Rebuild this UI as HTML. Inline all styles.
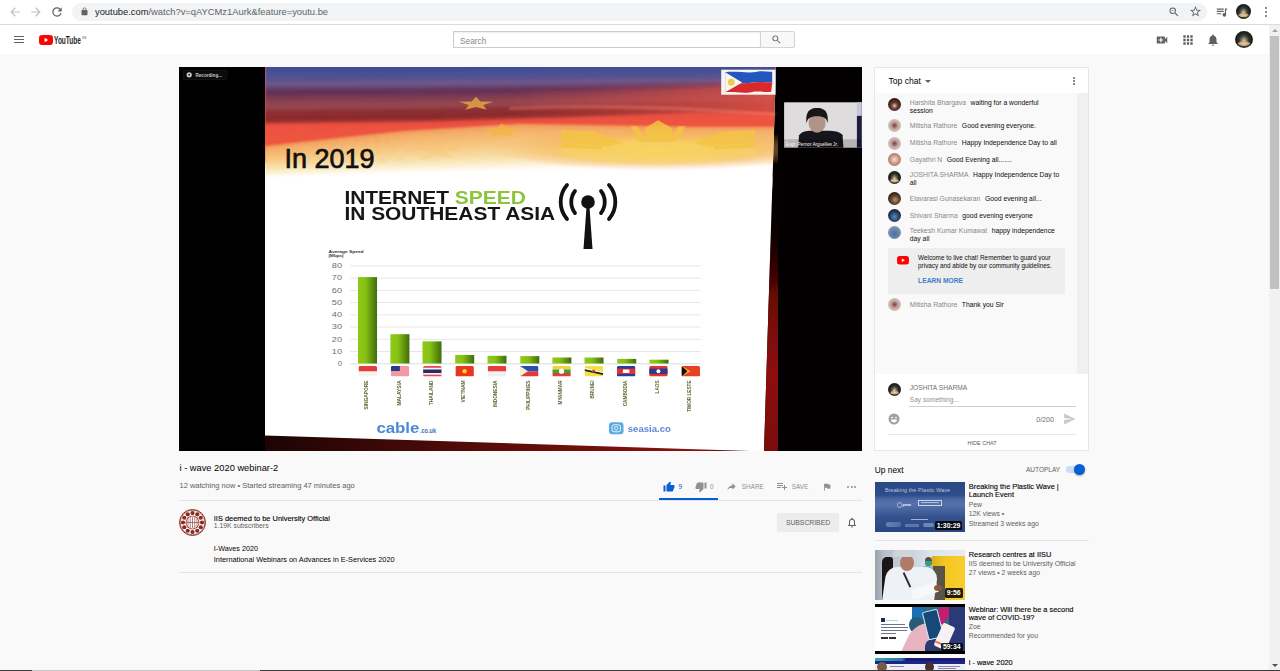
<!DOCTYPE html>
<html><head><meta charset="utf-8"><title>i - wave 2020 webinar-2 - YouTube</title>
<style>
html,body{margin:0;padding:0;width:1280px;height:671px;overflow:hidden;background:#f9f9f9;font-family:"Liberation Sans",sans-serif;}
.t{position:absolute;white-space:nowrap;line-height:1;}
.av{position:absolute;border-radius:50%;background:radial-gradient(ellipse 38% 16% at 50% 74%,#e8d4a8 0%,#c8a474 70%,rgba(160,120,70,0) 100%),radial-gradient(ellipse 40% 50% at 50% 58%,#e0d8c0 0%,#8a8476 30%,#3c3c36 65%,#1e1e1c 100%);}
</style></head><body>
<div style="position:absolute;left:0px;top:0px;width:1280px;height:24px;background:#fff"></div>
<div style="position:absolute;left:0px;top:24px;width:1280px;height:1px;background:#dadce0"></div>
<svg style="position:absolute;left:8px;top:5px" width="14" height="14" viewBox="0 0 24 24"><path d="M20 11H7.83l5.59-5.59L12 4l-8 8 8 8 1.41-1.41L7.83 13H20v-2z" fill="#bdc1c6"/></svg>
<svg style="position:absolute;left:29px;top:5px" width="14" height="14" viewBox="0 0 24 24"><path d="M12 4l-1.41 1.41L16.17 11H4v2h12.17l-5.58 5.59L12 20l8-8z" fill="#bdc1c6"/></svg>
<svg style="position:absolute;left:50px;top:5px" width="14" height="14" viewBox="0 0 24 24"><path d="M17.65 6.35A7.958 7.958 0 0 0 12 4c-4.42 0-7.99 3.58-7.99 8s3.57 8 7.99 8c3.73 0 6.84-2.55 7.73-6h-2.08A5.99 5.99 0 0 1 12 18c-3.31 0-6-2.69-6-6s2.69-6 6-6c1.66 0 3.14.69 4.22 1.78L13 11h7V4l-2.35 2.35z" fill="#5f6368"/></svg>
<div style="position:absolute;left:72px;top:3px;width:1135px;height:18px;background:#f1f3f4;border-radius:9px"></div>
<svg style="position:absolute;left:79.5px;top:7px" width="9" height="9" viewBox="0 0 24 24"><path d="M18 8h-1V6c0-2.76-2.24-5-5-5S7 3.24 7 6v2H6c-1.1 0-2 .9-2 2v10c0 1.1.9 2 2 2h12c1.1 0 2-.9 2-2V10c0-1.1-.9-2-2-2zM9 6c0-1.66 1.34-3 3-3s3 1.34 3 3v2H9V6z" fill="#5f6368"/></svg>
<div class="t" style="left:95.00px;top:8.39px;font-size:9.35px;color:#5f6368;font-weight:400;"><span style="color:#202124">youtube.com</span>/watch?v=qAYCMz1Aurk&amp;feature=youtu.be</div>
<svg style="position:absolute;left:1168px;top:6px" width="12" height="12" viewBox="0 0 24 24"><path d="M15.5 14h-.79l-.28-.27A6.471 6.471 0 0 0 16 9.5 6.5 6.5 0 1 0 9.5 16c1.61 0 3.09-.59 4.23-1.57l.27.28v.79l5 4.99L20.49 19l-4.99-5zm-6 0C7.01 14 5 11.99 5 9.5S7.01 5 9.5 5 14 7.01 14 9.5 11.99 14 9.5 14zM7 9h5v1H7z" fill="#5f6368"/></svg>
<svg style="position:absolute;left:1189px;top:5px" width="13" height="13" viewBox="0 0 24 24"><path d="M22 9.24l-7.19-.62L12 2 9.19 8.63 2 9.24l5.46 4.73L5.82 21 12 17.27 18.18 21l-1.63-7.03L22 9.24zM12 15.4l-3.76 2.27 1-4.28-3.32-2.88 4.38-.38L12 6.1l1.71 4.04 4.38.38-3.32 2.88 1 4.28L12 15.4z" fill="#5f6368"/></svg>
<svg style="position:absolute;left:1215px;top:5px" width="14" height="14" viewBox="0 0 24 24"><path d="M3 6h12v2H3zm0 4h12v2H3zm0 4h8v2H3z M17 6h4v2h-2v9a3 3 0 1 1-2-2.83z" fill="#5f6368"/></svg>
<div class="av" style="left:1236px;top:4px;width:15px;height:15px"></div>
<div style="position:absolute;left:1265px;top:7px;width:2px;height:2px;background:#5f6368;border-radius:1px"></div>
<div style="position:absolute;left:1265px;top:11px;width:2px;height:2px;background:#5f6368;border-radius:1px"></div>
<div style="position:absolute;left:1265px;top:15px;width:2px;height:2px;background:#5f6368;border-radius:1px"></div>
<div style="position:absolute;left:0px;top:25px;width:1269px;height:29px;background:#fff"></div>
<div style="position:absolute;left:14px;top:36px;width:10px;height:1.3px;background:#606060"></div>
<div style="position:absolute;left:14px;top:39px;width:10px;height:1.3px;background:#606060"></div>
<div style="position:absolute;left:14px;top:42px;width:10px;height:1.3px;background:#606060"></div>
<svg style="position:absolute;left:39px;top:35px" width="14" height="10" viewBox="0 0 28 20"><path d="M27.4 3.1A3.6 3.6 0 0 0 24.9.6C22.7 0 14 0 14 0S5.3 0 3.1.6A3.6 3.6 0 0 0 .6 3.1C0 5.3 0 10 0 10s0 4.7.6 6.9a3.6 3.6 0 0 0 2.5 2.5C5.3 20 14 20 14 20s8.7 0 10.9-.6a3.6 3.6 0 0 0 2.5-2.5C28 14.7 28 10 28 10s0-4.7-.6-6.9z" fill="#f00"/><path d="M11.2 14.3L18.5 10l-7.3-4.3z" fill="#fff"/></svg>
<svg style="position:absolute;left:54px;top:33px" width="30" height="14"><text x="0" y="11.2" font-size="11.5" font-weight="bold" fill="#282828" textLength="27" lengthAdjust="spacingAndGlyphs" font-family="Liberation Sans">YouTube</text></svg>
<div class="t" style="left:82.00px;top:36.24px;font-size:4.2px;color:#606060;font-weight:400;">IN</div>
<div style="position:absolute;left:453px;top:31px;width:308px;height:17px;background:#fff;border:1px solid #ccc;box-sizing:border-box;box-shadow:inset 0 1px 2px #eee"></div>
<div class="t" style="left:460.00px;top:36.67px;font-size:8.3px;color:#888;font-weight:400;">Search</div>
<div style="position:absolute;left:760px;top:31px;width:35px;height:17px;background:#f8f8f8;border:1px solid #d3d3d3;box-sizing:border-box;border-radius:0 2px 2px 0"></div>
<svg style="position:absolute;left:771px;top:34px" width="11" height="11" viewBox="0 0 24 24"><path d="M15.5 14h-.79l-.28-.27A6.471 6.471 0 0 0 16 9.5 6.5 6.5 0 1 0 9.5 16c1.61 0 3.09-.59 4.23-1.57l.27.28v.79l5 4.99L20.49 19l-4.99-5zm-6 0C7.01 14 5 11.99 5 9.5S7.01 5 9.5 5 14 7.01 14 9.5 11.99 14 9.5 14z" fill="#606060"/></svg>
<svg style="position:absolute;left:1155px;top:33px" width="14" height="14" viewBox="0 0 24 24"><path d="M17 10.5V7c0-.55-.45-1-1-1H4c-.55 0-1 .45-1 1v10c0 .55.45 1 1 1h12c.55 0 1-.45 1-1v-3.5l4 4v-11l-4 4zM14 13h-3v3H9v-3H6v-2h3V8h2v3h3v2z" fill="#606060"/></svg>
<svg style="position:absolute;left:1181px;top:33px" width="14" height="14" viewBox="0 0 24 24"><path d="M4 8h4V4H4v4zm6 12h4v-4h-4v4zm-6 0h4v-4H4v4zm0-6h4v-4H4v4zm6 0h4v-4h-4v4zm6-10v4h4V4h-4zm-6 4h4V4h-4v4zm6 6h4v-4h-4v4zm0 6h4v-4h-4v4z" fill="#606060"/></svg>
<svg style="position:absolute;left:1206px;top:33px" width="14" height="14" viewBox="0 0 24 24"><path d="M12 22c1.1 0 2-.9 2-2h-4c0 1.1.89 2 2 2zm6-6v-5c0-3.07-1.64-5.64-4.5-6.32V4c0-.83-.67-1.5-1.5-1.5s-1.5.67-1.5 1.5v.68C7.63 5.36 6 7.92 6 11v5l-2 2v1h16v-1l-2-2z" fill="#606060"/></svg>
<div class="av" style="left:1235px;top:31px;width:18px;height:17px"></div>
<div style="position:absolute;left:1269px;top:25px;width:11px;height:646px;background:#f1f1f1"></div>
<div style="position:absolute;left:1270px;top:36px;width:9px;height:253px;background:#c1c1c1"></div>
<div style="position:absolute;left:1272px;top:29px;width:0;height:0;border-left:3px solid transparent;border-right:3px solid transparent;border-bottom:3px solid #a3a3a3"></div>
<div style="position:absolute;left:1272px;top:664px;width:0;height:0;border-left:3px solid transparent;border-right:3px solid transparent;border-top:3px solid #505050"></div>
<div id="video" style="position:absolute;left:179px;top:67px;width:683px;height:384px;background:#000;overflow:hidden"><svg width="683" height="384" viewBox="0 0 683 384" style="position:absolute;left:0;top:0;font-family:'Liberation Sans',sans-serif"><defs>
<linearGradient id="sky" x1="86" y1="0" x2="90.4" y2="112" gradientUnits="userSpaceOnUse">
 <stop offset="0" stop-color="#4a5090"/>
 <stop offset="0.09" stop-color="#525290"/>
 <stop offset="0.16" stop-color="#6c5888"/>
 <stop offset="0.21" stop-color="#5e3458"/>
 <stop offset="0.28" stop-color="#7a3a52"/>
 <stop offset="0.34" stop-color="#8e424e"/>
 <stop offset="0.41" stop-color="#84343a"/>
 <stop offset="0.46" stop-color="#8a2e30"/>
 <stop offset="0.50" stop-color="#a03832"/>
 <stop offset="0.54" stop-color="#ec5040"/>
 <stop offset="0.64" stop-color="#f06848"/>
 <stop offset="0.69" stop-color="#f3a468"/>
 <stop offset="0.78" stop-color="#f6d090"/>
 <stop offset="0.88" stop-color="#faeac0"/>
 <stop offset="0.95" stop-color="#fdf8ec"/>
 <stop offset="1" stop-color="#ffffff"/>
</linearGradient>
<linearGradient id="bar" x1="0" x2="1" y1="0" y2="0">
 <stop offset="0" stop-color="#90ca16"/>
 <stop offset="0.4" stop-color="#86c014"/>
 <stop offset="1" stop-color="#3e6c08"/>
</linearGradient>
<linearGradient id="bot" x1="0" x2="1" y1="0" y2="0">
 <stop offset="0" stop-color="#1c0404"/>
 <stop offset="0.6" stop-color="#6a0e0a"/>
 <stop offset="0.9" stop-color="#8a1410"/>
 <stop offset="1" stop-color="#200404"/>
</linearGradient>
<linearGradient id="redge" x1="0" x2="0" y1="0" y2="1">
 <stop offset="0" stop-color="#200404" stop-opacity="0"/>
 <stop offset="0.42" stop-color="#300404" stop-opacity="0.2"/>
 <stop offset="0.6" stop-color="#6a0806" stop-opacity="1"/>
 <stop offset="0.8" stop-color="#8e1008"/>
 <stop offset="1" stop-color="#7a0c08"/>
</linearGradient>
<linearGradient id="topblue" x1="0" y1="0" x2="0" y2="1">
 <stop offset="0" stop-color="#4a5090" stop-opacity="1"/>
 <stop offset="0.5" stop-color="#4a5090" stop-opacity="0.7"/>
 <stop offset="1" stop-color="#5a5090" stop-opacity="0"/>
</linearGradient>
<radialGradient id="sunglow" cx="0.5" cy="0.5" r="0.5">
 <stop offset="0" stop-color="#f8d058" stop-opacity="0.95"/>
 <stop offset="0.6" stop-color="#f6b858" stop-opacity="0.6"/>
 <stop offset="1" stop-color="#f5a858" stop-opacity="0"/>
</radialGradient>
<linearGradient id="rightred" x1="0" x2="1" y1="0" y2="0">
 <stop offset="0" stop-color="#d85048" stop-opacity="0"/>
 <stop offset="0.5" stop-color="#d85048" stop-opacity="0.45"/>
 <stop offset="1" stop-color="#e05448" stop-opacity="0.85"/>
</linearGradient>
<filter id="blur1"><feGaussianBlur stdDeviation="1.2"/></filter>
<filter id="blur05"><feGaussianBlur stdDeviation="0.5"/></filter>
<filter id="blur2"><feGaussianBlur stdDeviation="2.5"/></filter>
</defs><polygon points="86,0 597,0 585,384 86,384" fill="#ffffff"/><clipPath id="slideclip"><polygon points="86,0 597,0 585,384 86,384"/></clipPath><g clip-path="url(#slideclip)"><g filter="url(#blur1)"><rect x="84" y="-4" width="516" height="100" fill="#ee5640"/><polygon fill="rgb(62,78,148)" points="86.0,-4.0 120.0,-4.0 160.0,-4.0 200.0,-4.0 226.0,-4.0 260.0,-4.0 300.0,-4.0 341.0,-4.0 400.0,-4.0 460.0,-4.0 521.0,-4.0 560.0,-4.0 597.0,-4.0 597.0,-0.7 560.0,-0.7 521.0,-0.7 460.0,-0.8 400.0,-0.8 341.0,-0.8 300.0,-0.8 260.0,-0.9 226.0,-0.9 200.0,-0.9 160.0,-0.9 120.0,-0.9 86.0,-0.9"/><polygon fill="rgb(62,78,148)" points="86.0,-4.0 120.0,-4.0 160.0,-4.0 200.0,-4.0 226.0,-4.0 260.0,-4.0 300.0,-4.0 341.0,-4.0 400.0,-4.0 460.0,-4.0 521.0,-4.0 560.0,-4.0 597.0,-4.0 597.0,0.5 560.0,0.5 521.0,0.5 460.0,0.5 400.0,0.5 341.0,0.5 300.0,0.6 260.0,0.6 226.0,0.6 200.0,0.6 160.0,0.6 120.0,0.6 86.0,0.6"/><polygon fill="rgb(63,78,148)" points="86.0,-4.0 120.0,-4.0 160.0,-4.0 200.0,-4.0 226.0,-4.0 260.0,-4.0 300.0,-4.0 341.0,-4.0 400.0,-4.0 460.0,-4.0 521.0,-4.0 560.0,-4.0 597.0,-4.0 597.0,1.6 560.0,1.7 521.0,1.7 460.0,1.8 400.0,1.8 341.0,1.9 300.0,2.0 260.0,2.0 226.0,2.0 200.0,2.0 160.0,2.1 120.0,2.1 86.0,2.1"/><polygon fill="rgb(65,79,148)" points="86.0,1.5 120.0,1.5 160.0,1.5 200.0,1.5 226.0,1.5 260.0,1.4 300.0,1.4 341.0,1.4 400.0,1.3 460.0,1.3 521.0,1.2 560.0,1.2 597.0,1.2 597.0,2.8 560.0,2.8 521.0,2.9 460.0,3.0 400.0,3.2 341.0,3.3 300.0,3.4 260.0,3.5 226.0,3.5 200.0,3.5 160.0,3.5 120.0,3.6 86.0,3.6"/><polygon fill="rgb(68,80,148)" points="86.0,3.0 120.0,3.0 160.0,3.0 200.0,2.9 226.0,2.9 260.0,2.9 300.0,2.8 341.0,2.7 400.0,2.6 460.0,2.5 521.0,2.4 560.0,2.4 597.0,2.3 597.0,4.0 560.0,4.0 521.0,4.1 460.0,4.3 400.0,4.5 341.0,4.7 300.0,4.8 260.0,4.9 226.0,4.9 200.0,5.0 160.0,5.0 120.0,5.1 86.0,5.1"/><polygon fill="rgb(70,81,148)" points="86.0,4.5 120.0,4.5 160.0,4.4 200.0,4.4 226.0,4.4 260.0,4.3 300.0,4.2 341.0,4.1 400.0,4.0 460.0,3.8 521.0,3.6 560.0,3.6 597.0,3.5 597.0,5.1 560.0,5.2 521.0,5.3 460.0,5.5 400.0,5.8 341.0,6.0 300.0,6.2 260.0,6.3 226.0,6.4 200.0,6.4 160.0,6.5 120.0,6.6 86.0,6.6"/><polygon fill="rgb(72,81,148)" points="86.0,6.0 120.0,6.0 160.0,5.9 200.0,5.9 226.0,5.8 260.0,5.8 300.0,5.6 341.0,5.5 400.0,5.3 460.0,5.0 521.0,4.8 560.0,4.7 597.0,4.7 597.0,6.3 560.0,6.4 521.0,6.5 460.0,6.8 400.0,7.1 341.0,7.4 300.0,7.6 260.0,7.8 226.0,7.9 200.0,7.9 160.0,8.0 120.0,8.0 86.0,8.1"/><polygon fill="rgb(75,82,148)" points="86.0,7.5 120.0,7.4 160.0,7.4 200.0,7.3 226.0,7.3 260.0,7.2 300.0,7.0 341.0,6.9 400.0,6.6 460.0,6.3 521.0,6.0 560.0,5.9 597.0,5.9 597.0,7.5 560.0,7.6 521.0,7.7 460.0,8.1 400.0,8.4 341.0,8.8 300.0,9.0 260.0,9.2 226.0,9.3 200.0,9.4 160.0,9.4 120.0,9.5 86.0,9.6"/><polygon fill="rgb(80,82,147)" points="86.0,9.0 120.0,8.9 160.0,8.9 200.0,8.8 226.0,8.7 260.0,8.6 300.0,8.4 341.0,8.2 400.0,7.9 460.0,7.6 521.0,7.2 560.0,7.1 597.0,7.0 597.0,8.7 560.0,8.8 521.0,8.9 460.0,9.3 400.0,9.8 341.0,10.1 300.0,10.4 260.0,10.6 226.0,10.8 200.0,10.8 160.0,10.9 120.0,11.0 86.0,11.1"/><polygon fill="rgb(84,82,145)" points="86.0,10.5 120.0,10.4 160.0,10.3 200.0,10.2 226.0,10.2 260.0,10.1 300.0,9.8 341.0,9.6 400.0,9.2 460.0,8.8 521.0,8.4 560.0,8.3 597.0,8.2 597.0,9.8 560.0,10.0 521.0,10.1 460.0,10.6 400.0,11.1 341.0,11.5 300.0,11.8 260.0,12.1 226.0,12.2 200.0,12.3 160.0,12.4 120.0,12.5 86.0,12.6"/><polygon fill="rgb(89,82,144)" points="86.0,12.0 120.0,11.9 160.0,11.8 200.0,11.7 226.0,11.6 260.0,11.5 300.0,11.2 341.0,11.0 400.0,10.6 460.0,10.1 521.0,9.6 560.0,9.5 597.0,9.4 597.0,11.0 560.0,11.1 521.0,11.3 460.0,11.8 400.0,12.4 341.0,12.9 300.0,13.2 260.0,13.5 226.0,13.7 200.0,13.8 160.0,13.9 120.0,14.0 86.0,14.1"/><polygon fill="rgb(96,84,143)" points="86.0,13.5 120.0,13.4 160.0,13.3 200.0,13.2 226.0,13.1 260.0,13.0 300.0,12.6 341.0,12.3 400.0,11.9 460.0,11.3 521.0,10.8 560.0,10.7 597.0,10.5 597.0,12.2 560.0,12.3 521.0,12.5 460.0,13.1 400.0,13.7 341.0,14.2 300.0,14.6 260.0,15.0 226.0,15.1 200.0,15.2 160.0,15.4 120.0,15.5 86.0,15.6"/><polygon fill="rgb(104,88,141)" points="86.0,15.0 120.0,14.9 160.0,14.8 200.0,14.6 226.0,14.6 260.0,14.4 300.0,14.0 341.0,13.7 400.0,13.2 460.0,12.6 521.0,12.0 560.0,11.8 597.0,11.7 597.0,13.3 560.0,13.5 521.0,13.7 460.0,14.4 400.0,15.0 341.0,15.6 300.0,16.0 260.0,16.4 226.0,16.6 200.0,16.7 160.0,16.8 120.0,17.0 86.0,17.1"/><polygon fill="rgb(110,89,138)" points="86.0,16.5 120.0,16.4 160.0,16.2 200.0,16.1 226.0,16.0 260.0,15.8 300.0,15.5 341.0,15.1 400.0,14.5 460.0,13.9 521.0,13.2 560.0,13.0 597.0,12.9 597.0,14.5 560.0,14.7 521.0,14.9 460.0,15.6 400.0,16.4 341.0,17.0 300.0,17.4 260.0,17.8 226.0,18.0 200.0,18.1 160.0,18.3 120.0,18.5 86.0,18.6"/><polygon fill="rgb(108,80,128)" points="86.0,18.0 120.0,17.9 160.0,17.7 200.0,17.6 226.0,17.5 260.0,17.3 300.0,16.9 341.0,16.4 400.0,15.8 460.0,15.1 521.0,14.4 560.0,14.2 597.0,14.0 597.0,15.7 560.0,15.9 521.0,16.1 460.0,16.9 400.0,17.7 341.0,18.4 300.0,18.8 260.0,19.3 226.0,19.5 200.0,19.6 160.0,19.8 120.0,20.0 86.0,20.1"/><polygon fill="rgb(107,72,117)" points="86.0,19.5 120.0,19.4 160.0,19.2 200.0,19.0 226.0,18.9 260.0,18.7 300.0,18.3 341.0,17.8 400.0,17.2 460.0,16.4 521.0,15.6 560.0,15.4 597.0,15.2 597.0,16.8 560.0,17.1 521.0,17.3 460.0,18.2 400.0,19.0 341.0,19.7 300.0,20.2 260.0,20.7 226.0,21.0 200.0,21.1 160.0,21.3 120.0,21.4 86.0,21.6"/><polygon fill="rgb(104,64,108)" points="86.0,21.0 120.0,20.8 160.0,20.7 200.0,20.5 226.0,20.4 260.0,20.1 300.0,19.7 341.0,19.2 400.0,18.5 460.0,17.6 521.0,16.8 560.0,16.6 597.0,16.4 597.0,18.0 560.0,18.2 521.0,18.5 460.0,19.4 400.0,20.3 341.0,21.1 300.0,21.6 260.0,22.2 226.0,22.4 200.0,22.5 160.0,22.7 120.0,22.9 86.0,23.1"/><polygon fill="rgb(99,57,98)" points="86.0,22.5 120.0,22.3 160.0,22.1 200.0,22.0 226.0,21.8 260.0,21.6 300.0,21.1 341.0,20.6 400.0,19.8 460.0,18.9 521.0,18.0 560.0,17.8 597.0,17.6 597.0,19.2 560.0,19.4 521.0,19.7 460.0,20.7 400.0,21.6 341.0,22.5 300.0,23.0 260.0,23.6 226.0,23.9 200.0,24.0 160.0,24.2 120.0,24.4 86.0,24.6"/><polygon fill="rgb(95,49,90)" points="86.0,24.0 120.0,23.8 160.0,23.6 200.0,23.4 226.0,23.3 260.0,23.0 300.0,22.5 341.0,21.9 400.0,21.1 460.0,20.2 521.0,19.2 560.0,19.0 597.0,18.7 597.0,20.4 560.0,20.6 521.0,20.9 460.0,21.9 400.0,23.0 341.0,23.8 300.0,24.4 260.0,25.0 226.0,25.3 200.0,25.5 160.0,25.7 120.0,25.9 86.0,26.1"/><polygon fill="rgb(100,50,87)" points="86.0,25.5 120.0,25.3 160.0,25.1 200.0,24.9 226.0,24.7 260.0,24.5 300.0,23.9 341.0,23.3 400.0,22.4 460.0,21.4 521.0,20.4 560.0,20.1 597.0,19.9 597.0,21.5 560.0,21.8 521.0,22.1 460.0,23.2 400.0,24.3 341.0,25.2 300.0,25.9 260.0,26.5 226.0,26.8 200.0,26.9 160.0,27.2 120.0,27.4 86.0,27.6"/><polygon fill="rgb(107,53,85)" points="86.0,27.0 120.0,26.8 160.0,26.6 200.0,26.3 226.0,26.2 260.0,25.9 300.0,25.3 341.0,24.7 400.0,23.8 460.0,22.7 521.0,21.6 560.0,21.3 597.0,21.1 597.0,22.7 560.0,23.0 521.0,23.3 460.0,24.5 400.0,25.6 341.0,26.6 300.0,27.3 260.0,27.9 226.0,28.2 200.0,28.4 160.0,28.6 120.0,28.9 86.0,29.1"/><polygon fill="rgb(114,55,84)" points="86.0,28.5 120.0,28.3 160.0,28.0 200.0,27.8 226.0,27.6 260.0,27.3 300.0,26.7 341.0,26.0 400.0,25.1 460.0,23.9 521.0,22.8 560.0,22.5 597.0,22.2 597.0,23.9 560.0,24.2 521.0,24.5 460.0,25.7 400.0,26.9 341.0,28.0 300.0,28.7 260.0,29.4 226.0,29.7 200.0,29.9 160.0,30.1 120.0,30.4 86.0,30.6"/><polygon fill="rgb(121,58,82)" points="86.0,30.0 120.0,29.8 160.0,29.5 200.0,29.3 226.0,29.1 260.0,28.8 300.0,28.1 341.0,27.4 400.0,26.4 460.0,25.2 521.0,24.0 560.0,23.7 597.0,23.4 597.0,25.0 560.0,25.4 521.0,25.7 460.0,27.0 400.0,28.2 341.0,29.3 300.0,30.1 260.0,30.8 226.0,31.1 200.0,31.3 160.0,31.6 120.0,31.9 86.0,32.1"/><polygon fill="rgb(127,60,82)" points="86.0,31.5 120.0,31.3 160.0,31.0 200.0,30.7 226.0,30.6 260.0,30.2 300.0,29.5 341.0,28.8 400.0,27.7 460.0,26.5 521.0,25.2 560.0,24.9 597.0,24.6 597.0,26.2 560.0,26.5 521.0,26.9 460.0,28.2 400.0,29.6 341.0,30.7 300.0,31.5 260.0,32.2 226.0,32.6 200.0,32.8 160.0,33.1 120.0,33.4 86.0,33.6"/><polygon fill="rgb(133,64,81)" points="86.0,33.0 120.0,32.8 160.0,32.5 200.0,32.2 226.0,32.0 260.0,31.7 300.0,30.9 341.0,30.1 400.0,29.0 460.0,27.7 521.0,26.4 560.0,26.1 597.0,25.7 597.0,27.4 560.0,27.7 521.0,28.1 460.0,29.5 400.0,30.9 341.0,32.1 300.0,32.9 260.0,33.7 226.0,34.1 200.0,34.2 160.0,34.5 120.0,34.8 86.0,35.1"/><polygon fill="rgb(139,66,80)" points="86.0,34.5 120.0,34.2 160.0,34.0 200.0,33.7 226.0,33.5 260.0,33.1 300.0,32.3 341.0,31.5 400.0,30.4 460.0,29.0 521.0,27.6 560.0,27.2 597.0,26.9 597.0,28.5 560.0,28.9 521.0,29.3 460.0,30.8 400.0,32.2 341.0,33.4 300.0,34.3 260.0,35.1 226.0,35.5 200.0,35.7 160.0,36.0 120.0,36.3 86.0,36.6"/><polygon fill="rgb(143,68,80)" points="86.0,36.0 120.0,35.7 160.0,35.4 200.0,35.1 226.0,34.9 260.0,34.5 300.0,33.7 341.0,32.9 400.0,31.7 460.0,30.3 521.0,28.8 560.0,28.4 597.0,28.1 597.0,29.7 560.0,30.1 521.0,30.5 460.0,32.0 400.0,33.5 341.0,34.8 300.0,35.7 260.0,36.6 226.0,37.0 200.0,37.2 160.0,37.5 120.0,37.8 86.0,38.1"/><polygon fill="rgb(145,69,80)" points="86.0,37.5 120.0,37.2 160.0,36.9 200.0,36.6 226.0,36.4 260.0,36.0 300.0,35.1 341.0,34.3 400.0,33.0 460.0,31.5 521.0,30.0 560.0,29.6 597.0,29.2 597.0,30.9 560.0,31.3 521.0,31.7 460.0,33.3 400.0,34.8 341.0,36.2 300.0,37.1 260.0,38.0 226.0,38.4 200.0,38.6 160.0,39.0 120.0,39.3 86.0,39.6"/><polygon fill="rgb(146,70,80)" points="86.0,39.0 120.0,38.7 160.0,38.4 200.0,38.1 226.0,37.8 260.0,37.4 300.0,36.5 341.0,35.6 400.0,34.3 460.0,32.8 521.0,31.2 560.0,30.8 597.0,30.4 597.0,32.1 560.0,32.5 521.0,32.9 460.0,34.5 400.0,36.2 341.0,37.5 300.0,38.5 260.0,39.4 226.0,39.9 200.0,40.1 160.0,40.5 120.0,40.8 86.0,41.1"/><polygon fill="rgb(148,69,78)" points="86.0,40.5 120.0,40.2 160.0,39.9 200.0,39.5 226.0,39.3 260.0,38.9 300.0,37.9 341.0,37.0 400.0,35.6 460.0,34.0 521.0,32.4 560.0,32.0 597.0,31.6 597.0,33.2 560.0,33.6 521.0,34.1 460.0,35.8 400.0,37.5 341.0,38.9 300.0,39.9 260.0,40.9 226.0,41.3 200.0,41.6 160.0,41.9 120.0,42.3 86.0,42.6"/><polygon fill="rgb(144,60,68)" points="86.0,42.0 120.0,41.7 160.0,41.3 200.0,41.0 226.0,40.7 260.0,40.3 300.0,39.3 341.0,38.4 400.0,37.0 460.0,35.3 521.0,33.6 560.0,33.2 597.0,32.8 597.0,34.4 560.0,34.8 521.0,35.3 460.0,37.1 400.0,38.8 341.0,40.3 300.0,41.3 260.0,42.3 226.0,42.8 200.0,43.0 160.0,43.4 120.0,43.8 86.0,44.1"/><polygon fill="rgb(142,52,57)" points="86.0,43.5 120.0,43.2 160.0,42.8 200.0,42.4 226.0,42.2 260.0,41.7 300.0,40.7 341.0,39.7 400.0,38.3 460.0,36.6 521.0,34.8 560.0,34.4 597.0,33.9 597.0,35.6 560.0,36.0 521.0,36.5 460.0,38.3 400.0,40.1 341.0,41.7 300.0,42.7 260.0,43.7 226.0,44.2 200.0,44.5 160.0,44.9 120.0,45.3 86.0,45.6"/><polygon fill="rgb(140,47,51)" points="86.0,45.0 120.0,44.7 160.0,44.3 200.0,43.9 226.0,43.7 260.0,43.2 300.0,42.1 341.0,41.1 400.0,39.6 460.0,37.8 521.0,36.0 560.0,35.5 597.0,35.1 597.0,36.7 560.0,37.2 521.0,37.7 460.0,39.6 400.0,41.4 341.0,43.0 300.0,44.1 260.0,45.2 226.0,45.7 200.0,46.0 160.0,46.4 120.0,46.8 86.0,47.1"/><polygon fill="rgb(139,46,49)" points="86.0,46.5 120.0,46.2 160.0,45.8 200.0,45.4 226.0,45.1 260.0,44.6 300.0,43.6 341.0,42.5 400.0,40.9 460.0,39.1 521.0,37.2 560.0,36.7 597.0,36.3 597.0,37.9 560.0,38.4 521.0,38.9 460.0,40.8 400.0,42.8 341.0,44.4 300.0,45.5 260.0,46.6 226.0,47.1 200.0,47.4 160.0,47.8 120.0,48.2 86.0,48.6"/><polygon fill="rgb(139,45,48)" points="86.0,48.0 120.0,47.7 160.0,47.2 200.0,46.8 226.0,46.6 260.0,46.0 300.0,45.0 341.0,43.8 400.0,42.2 460.0,40.3 521.0,38.4 560.0,37.9 597.0,37.4 597.0,39.1 560.0,39.6 521.0,40.1 460.0,42.1 400.0,44.1 341.0,45.8 300.0,46.9 260.0,48.1 226.0,48.6 200.0,48.9 160.0,49.3 120.0,49.7 86.0,50.1"/><polygon fill="rgb(138,44,46)" points="86.0,49.5 120.0,49.1 160.0,48.7 200.0,48.3 226.0,48.0 260.0,47.5 300.0,46.4 341.0,45.2 400.0,43.6 460.0,41.6 521.0,39.6 560.0,39.1 597.0,38.6 597.0,40.2 560.0,40.8 521.0,41.3 460.0,43.4 400.0,45.4 341.0,47.1 300.0,48.3 260.0,49.5 226.0,50.1 200.0,50.3 160.0,50.8 120.0,51.2 86.0,51.6"/><polygon fill="rgb(138,42,44)" points="86.0,51.0 120.0,50.6 160.0,50.2 200.0,49.8 226.0,49.5 260.0,48.9 300.0,47.8 341.0,46.6 400.0,44.9 460.0,42.9 521.0,40.8 560.0,40.3 597.0,39.8 597.0,41.4 560.0,41.9 521.0,42.5 460.0,44.6 400.0,46.7 341.0,48.5 300.0,49.7 260.0,50.9 226.0,51.5 200.0,51.8 160.0,52.3 120.0,52.7 86.0,53.1"/><polygon fill="rgb(146,46,46)" points="86.0,52.5 120.0,52.1 160.0,51.7 200.0,51.2 226.0,50.9 260.0,50.4 300.0,49.2 341.0,48.0 400.0,46.2 460.0,44.1 521.0,42.0 560.0,41.5 597.0,41.0 597.0,42.6 560.0,43.1 521.0,43.7 460.0,45.9 400.0,48.0 341.0,49.9 300.0,51.1 260.0,52.4 226.0,53.0 200.0,53.3 160.0,53.7 120.0,54.2 86.0,54.6"/><polygon fill="rgb(155,50,49)" points="86.0,54.0 120.0,53.6 160.0,53.1 200.0,52.7 226.0,52.4 260.0,51.8 300.0,50.6 341.0,49.3 400.0,47.5 460.0,45.4 521.0,43.2 560.0,42.6 597.0,42.1 597.0,43.8 560.0,44.3 521.0,44.9 460.0,47.1 400.0,49.4 341.0,51.2 300.0,52.5 260.0,53.8 226.0,54.4 200.0,54.7 160.0,55.2 120.0,55.7 86.0,56.1"/><polygon fill="rgb(183,60,54)" points="86.0,55.5 120.0,55.1 160.0,54.6 200.0,54.1 226.0,53.8 260.0,53.2 300.0,52.0 341.0,50.7 400.0,48.8 460.0,46.6 521.0,44.4 560.0,43.8 597.0,43.3 597.0,44.9 560.0,45.5 521.0,46.1 460.0,48.4 400.0,50.7 341.0,52.6 300.0,54.0 260.0,55.3 226.0,55.9 200.0,56.2 160.0,56.7 120.0,57.2 86.0,57.6"/><polygon fill="rgb(228,77,63)" points="86.0,57.0 120.0,56.6 160.0,56.1 200.0,55.6 226.0,55.3 260.0,54.7 300.0,53.4 341.0,52.1 400.0,50.2 460.0,47.9 521.0,45.6 560.0,45.0 597.0,44.5 597.0,46.1 560.0,46.7 521.0,47.3 460.0,49.7 400.0,52.0 341.0,54.0 300.0,55.4 260.0,56.7 226.0,57.3 200.0,57.7 160.0,58.2 120.0,58.7 86.0,59.1"/><polygon fill="rgb(236,81,64)" points="86.0,58.5 120.0,58.1 160.0,57.6 200.0,57.1 226.0,56.8 260.0,56.1 300.0,54.8 341.0,53.4 400.0,51.5 460.0,49.2 521.0,46.8 560.0,46.2 597.0,45.6 597.0,47.3 560.0,47.9 521.0,48.5 460.0,50.9 400.0,53.3 341.0,55.4 300.0,56.8 260.0,58.1 226.0,58.8 200.0,59.1 160.0,59.6 120.0,60.2 86.0,60.6"/><polygon fill="rgb(236,81,64)" points="86.0,60.0 120.0,59.6 160.0,59.1 200.0,58.5 226.0,58.2 260.0,57.6 300.0,56.2 341.0,54.8 400.0,52.8 460.0,50.4 521.0,48.0 560.0,47.4 597.0,46.8 597.0,48.4 560.0,49.0 521.0,49.7 460.0,52.2 400.0,54.6 341.0,56.7 300.0,58.2 260.0,59.6 226.0,60.2 200.0,60.6 160.0,61.1 120.0,61.6 86.0,62.1"/><polygon fill="rgb(237,82,64)" points="86.0,61.5 120.0,61.1 160.0,60.5 200.0,60.0 226.0,59.7 260.0,59.0 300.0,57.6 341.0,56.2 400.0,54.1 460.0,51.7 521.0,49.2 560.0,48.6 597.0,48.0 597.0,49.6 560.0,50.2 521.0,50.9 460.0,53.4 400.0,56.0 341.0,58.1 300.0,59.6 260.0,61.0 226.0,61.7 200.0,62.1 160.0,62.6 120.0,63.1 86.0,63.6"/><polygon fill="rgb(237,82,64)" points="86.0,63.0 120.0,62.5 160.0,62.0 200.0,61.5 226.0,61.1 260.0,60.4 300.0,59.0 341.0,57.5 400.0,55.4 460.0,52.9 521.0,50.4 560.0,49.8 597.0,49.1 597.0,50.8 560.0,51.4 521.0,52.1 460.0,54.7 400.0,57.3 341.0,59.5 300.0,61.0 260.0,62.5 226.0,63.2 200.0,63.5 160.0,64.1 120.0,64.6 86.0,65.1"/><polygon fill="rgb(237,83,64)" points="86.0,64.5 120.0,64.0 160.0,63.5 200.0,62.9 226.0,62.6 260.0,61.9 300.0,60.4 341.0,58.9 400.0,56.8 460.0,54.2 521.0,51.6 560.0,50.9 597.0,50.3 597.0,51.9 560.0,52.6 521.0,53.3 460.0,56.0 400.0,58.6 341.0,60.8 300.0,62.4 260.0,63.9 226.0,64.6 200.0,65.0 160.0,65.5 120.0,66.1 86.0,66.6"/><polygon fill="rgb(237,84,64)" points="86.0,66.0 120.0,65.5 160.0,65.0 200.0,64.4 226.0,64.0 260.0,63.3 300.0,61.8 341.0,60.3 400.0,58.1 460.0,55.5 521.0,52.8 560.0,52.1 597.0,51.5 597.0,53.1 560.0,53.8 521.0,54.5 460.0,57.2 400.0,59.9 341.0,62.2 300.0,63.8 260.0,65.3 226.0,66.1 200.0,66.4 160.0,67.0 120.0,67.6 86.0,68.1"/><polygon fill="rgb(237,84,64)" points="86.0,67.5 120.0,67.0 160.0,66.4 200.0,65.9 226.0,65.5 260.0,64.8 300.0,63.2 341.0,61.7 400.0,59.4 460.0,56.7 521.0,54.0 560.0,53.3 597.0,52.6 597.0,54.3 560.0,55.0 521.0,55.7 460.0,58.5 400.0,61.2 341.0,63.6 300.0,65.2 260.0,66.8 226.0,67.5 200.0,67.9 160.0,68.5 120.0,69.1 86.0,69.6"/><polygon fill="rgb(238,85,64)" points="86.0,69.0 120.0,68.5 160.0,67.9 200.0,67.3 226.0,66.9 260.0,66.2 300.0,64.6 341.0,63.0 400.0,60.7 460.0,58.0 521.0,55.2 560.0,54.5 597.0,53.8 597.0,55.5 560.0,56.2 521.0,56.9 460.0,59.7 400.0,62.6 341.0,64.9 300.0,66.6 260.0,68.2 226.0,69.0 200.0,69.4 160.0,70.0 120.0,70.6 86.0,71.1"/><polygon fill="rgb(238,86,64)" points="86.0,70.5 120.0,70.0 160.0,69.4 200.0,68.8 226.0,68.4 260.0,67.6 300.0,66.0 341.0,64.4 400.0,62.0 460.0,59.2 521.0,56.4 560.0,55.7 597.0,55.0 597.0,56.6 560.0,57.3 521.0,58.1 460.0,61.0 400.0,63.9 341.0,66.3 300.0,68.0 260.0,69.6 226.0,70.4 200.0,70.8 160.0,71.5 120.0,72.1 86.0,72.6"/><polygon fill="rgb(238,86,64)" points="86.0,72.0 120.0,71.5 160.0,70.9 200.0,70.2 226.0,69.8 260.0,69.1 300.0,67.4 341.0,65.8 400.0,63.4 460.0,60.5 521.0,57.6 560.0,56.9 597.0,56.2 597.0,57.8 560.0,58.5 521.0,59.3 460.0,62.3 400.0,65.2 341.0,67.7 300.0,69.4 260.0,71.1 226.0,71.9 200.0,72.3 160.0,72.9 120.0,73.6 86.0,74.1"/><polygon fill="rgb(238,86,64)" points="86.0,73.5 120.0,73.0 160.0,72.3 200.0,71.7 226.0,71.3 260.0,70.5 300.0,68.8 341.0,67.1 400.0,64.7 460.0,61.8 521.0,58.8 560.0,58.0 597.0,57.3 597.0,59.0 560.0,59.7 521.0,60.5 460.0,63.5 400.0,66.5 341.0,69.1 300.0,70.8 260.0,72.5 226.0,73.3 200.0,73.8 160.0,74.4 120.0,75.1 86.0,75.6"/><polygon fill="rgb(238,86,64)" points="86.0,75.0 120.0,74.5 160.0,73.8 200.0,73.2 226.0,72.8 260.0,71.9 300.0,70.2 341.0,68.5 400.0,66.0 460.0,63.0 521.0,60.0 560.0,59.2 597.0,58.5 597.0,60.1 560.0,60.9 521.0,61.7 460.0,64.8 400.0,67.8 341.0,70.4 300.0,72.2 260.0,74.0 226.0,74.8 200.0,75.2 160.0,75.9 120.0,76.5 86.0,77.1"/><polygon fill="rgb(238,86,64)" points="86.0,76.5 120.0,75.9 160.0,75.3 200.0,74.6 226.0,74.2 260.0,73.4 300.0,71.7 341.0,69.9 400.0,67.3 460.0,64.3 521.0,61.2 560.0,60.4 597.0,59.7 597.0,61.3 560.0,62.1 521.0,62.9 460.0,66.0 400.0,69.2 341.0,71.8 300.0,73.6 260.0,75.4 226.0,76.3 200.0,76.7 160.0,77.4 120.0,78.0 86.0,78.6"/><polygon fill="rgb(238,86,64)" points="86.0,78.0 120.0,77.4 160.0,76.8 200.0,76.1 226.0,75.7 260.0,74.8 300.0,73.1 341.0,71.2 400.0,68.6 460.0,65.5 521.0,62.4 560.0,61.6 597.0,60.8 597.0,62.5 560.0,63.3 521.0,64.1 460.0,67.3 400.0,70.5 341.0,73.2 300.0,75.0 260.0,76.8 226.0,77.7 200.0,78.2 160.0,78.8 120.0,79.5 86.0,80.1"/><polygon fill="rgb(238,86,64)" points="86.0,79.5 120.0,78.9 160.0,78.2 200.0,77.6 226.0,77.1 260.0,76.3 300.0,74.5 341.0,72.6 400.0,70.0 460.0,66.8 521.0,63.6 560.0,62.8 597.0,62.0 597.0,63.6 560.0,64.4 521.0,65.3 460.0,68.6 400.0,71.8 341.0,74.5 300.0,76.4 260.0,78.3 226.0,79.2 200.0,79.6 160.0,80.3 120.0,81.0 86.0,81.6"/><polygon fill="rgb(238,86,64)" points="86.0,81.0 120.0,80.4 160.0,79.7 200.0,79.0 226.0,78.6 260.0,77.7 300.0,75.9 341.0,74.0 400.0,71.3 460.0,68.1 521.0,64.8 560.0,64.0 597.0,63.2 597.0,64.8 560.0,65.6 521.0,66.5 460.0,69.8 400.0,73.1 341.0,75.9 300.0,77.8 260.0,79.7 226.0,80.6 200.0,81.1 160.0,81.8 120.0,82.5 86.0,83.1"/><polygon fill="rgb(238,86,64)" points="86.0,82.5 120.0,81.9 160.0,81.2 200.0,80.5 226.0,80.0 260.0,79.1 300.0,77.3 341.0,75.4 400.0,72.6 460.0,69.3 521.0,66.0 560.0,65.2 597.0,64.4 597.0,66.0 560.0,66.8 521.0,67.7 460.0,71.1 400.0,74.4 341.0,77.3 300.0,79.2 260.0,81.2 226.0,82.1 200.0,82.5 160.0,83.3 120.0,84.0 86.0,84.6"/><polygon fill="rgb(238,86,64)" points="86.0,84.0 120.0,83.4 160.0,82.7 200.0,82.0 226.0,81.5 260.0,80.6 300.0,78.7 341.0,76.7 400.0,73.9 460.0,70.6 521.0,67.2 560.0,66.3 597.0,65.5 597.0,67.2 560.0,68.0 521.0,68.9 460.0,72.4 400.0,75.8 341.0,78.6 300.0,80.6 260.0,82.6 226.0,83.5 200.0,84.0 160.0,84.7 120.0,85.5 86.0,86.1"/><polygon fill="rgb(238,86,64)" points="86.0,85.5 120.0,84.9 160.0,84.1 200.0,83.4 226.0,82.9 260.0,82.0 300.0,80.1 341.0,78.1 400.0,75.2 460.0,71.8 521.0,68.4 560.0,67.5 597.0,66.7 597.0,68.3 560.0,69.2 521.0,70.1 460.0,73.6 400.0,77.1 341.0,80.0 300.0,82.1 260.0,84.0 226.0,85.0 200.0,85.5 160.0,86.2 120.0,87.0 86.0,87.6"/><polygon fill="rgb(238,86,64)" points="86.0,87.0 120.0,86.4 160.0,85.6 200.0,84.9 226.0,84.4 260.0,83.5 300.0,81.5 341.0,79.5 400.0,76.6 460.0,73.1 521.0,69.6 560.0,68.7 597.0,67.9 597.0,69.5 560.0,70.4 521.0,71.3 460.0,74.9 400.0,78.4 341.0,81.4 300.0,83.5 260.0,85.5 226.0,86.4 200.0,86.9 160.0,87.7 120.0,88.5 86.0,89.1"/><polygon fill="rgb(238,86,64)" points="86.0,88.5 120.0,87.9 160.0,87.1 200.0,86.3 226.0,85.9 260.0,84.9 300.0,82.9 341.0,80.8 400.0,77.9 460.0,74.4 521.0,70.8 560.0,69.9 597.0,69.0 597.0,70.7 560.0,71.6 521.0,72.5 460.0,76.1 400.0,79.7 341.0,82.8 300.0,84.9 260.0,86.9 226.0,87.9 200.0,88.4 160.0,89.2 120.0,89.9 86.0,90.6"/><polygon fill="rgb(238,86,64)" points="86.0,90.0 120.0,89.3 160.0,88.6 200.0,87.8 226.0,87.3 260.0,86.3 300.0,84.3 341.0,82.2 400.0,79.2 460.0,75.6 521.0,72.0 560.0,71.1 597.0,70.2 597.0,71.8 560.0,72.7 521.0,73.7 460.0,77.4 400.0,81.0 341.0,84.1 300.0,86.3 260.0,88.4 226.0,89.3 200.0,89.9 160.0,90.6 120.0,91.4 86.0,92.1"/><polygon fill="rgb(238,86,64)" points="86.0,91.5 120.0,90.8 160.0,90.1 200.0,89.3 226.0,88.8 260.0,87.8 300.0,85.7 341.0,83.6 400.0,80.5 460.0,76.9 521.0,73.2 560.0,72.3 597.0,71.4 597.0,73.0 560.0,73.9 521.0,74.9 460.0,78.7 400.0,82.4 341.0,85.5 300.0,87.7 260.0,89.8 226.0,90.8 200.0,91.3 160.0,92.1 120.0,92.9 86.0,93.6"/><polygon fill="rgb(238,86,64)" points="86.0,93.0 120.0,92.3 160.0,91.5 200.0,90.7 226.0,90.2 260.0,89.2 300.0,87.1 341.0,84.9 400.0,81.8 460.0,78.2 521.0,74.4 560.0,73.4 597.0,72.5 597.0,74.2 560.0,75.1 521.0,76.1 460.0,79.9 400.0,83.7 341.0,86.9 300.0,89.1 260.0,91.2 226.0,92.3 200.0,92.8 160.0,93.6 120.0,94.4 86.0,95.1"/><polygon fill="rgb(238,86,64)" points="86.0,94.5 120.0,93.8 160.0,93.0 200.0,92.2 226.0,91.7 260.0,90.7 300.0,88.5 341.0,86.3 400.0,83.2 460.0,79.4 521.0,75.6 560.0,74.6 597.0,73.7 597.0,75.3 560.0,76.3 521.0,77.3 460.0,81.2 400.0,85.0 341.0,88.2 300.0,90.5 260.0,92.7 226.0,93.7 200.0,94.2 160.0,95.1 120.0,95.9 86.0,96.6"/><polygon fill="rgb(242,156,93)" points="86.0,79.0 120.0,75.4 160.0,71.1 200.0,66.8 226.0,64.0 260.0,61.9 300.0,59.5 341.0,57.0 400.0,58.0 460.0,59.0 521.0,60.0 560.0,60.0 597.0,60.0 597.0,61.6 560.0,61.6 521.0,61.6 460.0,60.7 400.0,59.8 341.0,58.9 300.0,61.3 260.0,63.7 226.0,65.7 200.0,68.4 160.0,72.6 120.0,76.7 86.0,80.3"/><polygon fill="rgb(243,161,96)" points="86.0,79.8 120.0,76.2 160.0,72.0 200.0,67.8 226.0,65.1 260.0,63.0 300.0,60.6 341.0,58.2 400.0,59.1 460.0,60.0 521.0,61.0 560.0,61.0 597.0,61.0 597.0,62.6 560.0,62.6 521.0,62.6 460.0,61.7 400.0,60.9 341.0,60.1 300.0,62.5 260.0,64.8 226.0,66.8 200.0,69.4 160.0,73.5 120.0,77.6 86.0,81.1"/><polygon fill="rgb(243,165,99)" points="86.0,80.6 120.0,77.1 160.0,73.0 200.0,68.8 226.0,66.2 260.0,64.1 300.0,61.8 341.0,59.4 400.0,60.2 460.0,61.1 521.0,62.0 560.0,62.0 597.0,62.0 597.0,63.6 560.0,63.6 521.0,63.7 460.0,62.8 400.0,62.0 341.0,61.2 300.0,63.6 260.0,65.9 226.0,67.9 200.0,70.5 160.0,74.5 120.0,78.5 86.0,81.9"/><polygon fill="rgb(243,170,102)" points="86.0,81.4 120.0,78.0 160.0,73.9 200.0,69.9 226.0,67.2 260.0,65.2 300.0,62.9 341.0,60.5 400.0,61.3 460.0,62.2 521.0,63.0 560.0,63.0 597.0,63.0 597.0,64.6 560.0,64.6 521.0,64.7 460.0,63.8 400.0,63.1 341.0,62.4 300.0,64.7 260.0,67.0 226.0,68.9 200.0,71.5 160.0,75.4 120.0,79.3 86.0,82.7"/><polygon fill="rgb(244,175,105)" points="86.0,82.2 120.0,78.8 160.0,74.9 200.0,70.9 226.0,68.3 260.0,66.4 300.0,64.1 341.0,61.7 400.0,62.5 460.0,63.2 521.0,64.1 560.0,64.0 597.0,64.0 597.0,65.6 560.0,65.6 521.0,65.7 460.0,64.9 400.0,64.2 341.0,63.6 300.0,65.9 260.0,68.1 226.0,70.0 200.0,72.5 160.0,76.4 120.0,80.2 86.0,83.5"/><polygon fill="rgb(244,178,107)" points="86.0,83.0 120.0,79.7 160.0,75.8 200.0,71.9 226.0,69.4 260.0,67.5 300.0,65.2 341.0,62.9 400.0,63.6 460.0,64.3 521.0,65.1 560.0,65.0 597.0,65.0 597.0,66.6 560.0,66.6 521.0,66.7 460.0,66.0 400.0,65.4 341.0,64.8 300.0,67.0 260.0,69.2 226.0,71.1 200.0,73.5 160.0,77.3 120.0,81.1 86.0,84.3"/><polygon fill="rgb(244,180,109)" points="86.0,83.8 120.0,80.6 160.0,76.7 200.0,72.9 226.0,70.5 260.0,68.6 300.0,66.3 341.0,64.1 400.0,64.7 460.0,65.3 521.0,66.1 560.0,66.0 597.0,66.0 597.0,67.6 560.0,67.7 521.0,67.7 460.0,67.0 400.0,66.5 341.0,66.0 300.0,68.2 260.0,70.3 226.0,72.2 200.0,74.6 160.0,78.3 120.0,81.9 86.0,85.1"/><polygon fill="rgb(244,182,111)" points="86.0,84.6 120.0,81.4 160.0,77.7 200.0,74.0 226.0,71.5 260.0,69.7 300.0,67.5 341.0,65.3 400.0,65.8 460.0,66.4 521.0,67.1 560.0,67.1 597.0,67.0 597.0,68.6 560.0,68.7 521.0,68.7 460.0,68.1 400.0,67.6 341.0,67.1 300.0,69.3 260.0,71.4 226.0,73.2 200.0,75.6 160.0,79.2 120.0,82.8 86.0,85.9"/><polygon fill="rgb(245,184,113)" points="86.0,85.4 120.0,82.3 160.0,78.6 200.0,75.0 226.0,72.6 260.0,70.8 300.0,68.6 341.0,66.4 400.0,66.9 460.0,67.4 521.0,68.1 560.0,68.1 597.0,68.0 597.0,69.6 560.0,69.7 521.0,69.7 460.0,69.1 400.0,68.7 341.0,68.3 300.0,70.5 260.0,72.5 226.0,74.3 200.0,76.6 160.0,80.1 120.0,83.7 86.0,86.7"/><polygon fill="rgb(245,186,115)" points="86.0,86.2 120.0,83.2 160.0,79.6 200.0,76.0 226.0,73.7 260.0,71.9 300.0,69.8 341.0,67.6 400.0,68.0 460.0,68.5 521.0,69.1 560.0,69.1 597.0,69.0 597.0,70.6 560.0,70.7 521.0,70.8 460.0,70.2 400.0,69.8 341.0,69.5 300.0,71.6 260.0,73.7 226.0,75.4 200.0,77.6 160.0,81.1 120.0,84.5 86.0,87.5"/><polygon fill="rgb(245,188,117)" points="86.0,87.0 120.0,84.0 160.0,80.5 200.0,77.0 226.0,74.8 260.0,73.0 300.0,70.9 341.0,68.8 400.0,69.2 460.0,69.5 521.0,70.1 560.0,70.1 597.0,70.0 597.0,71.6 560.0,71.7 521.0,71.8 460.0,71.2 400.0,71.0 341.0,70.7 300.0,72.7 260.0,74.8 226.0,76.5 200.0,78.7 160.0,82.0 120.0,85.4 86.0,88.3"/><polygon fill="rgb(245,190,119)" points="86.0,87.8 120.0,84.9 160.0,81.5 200.0,78.0 226.0,75.8 260.0,74.1 300.0,72.1 341.0,70.0 400.0,70.3 460.0,70.6 521.0,71.2 560.0,71.1 597.0,71.0 597.0,72.6 560.0,72.7 521.0,72.8 460.0,72.3 400.0,72.1 341.0,71.9 300.0,73.9 260.0,75.9 226.0,77.5 200.0,79.7 160.0,83.0 120.0,86.3 86.0,89.1"/><polygon fill="rgb(245,192,121)" points="86.0,88.6 120.0,85.8 160.0,82.4 200.0,79.1 226.0,76.9 260.0,75.2 300.0,73.2 341.0,71.2 400.0,71.4 460.0,71.7 521.0,72.2 560.0,72.1 597.0,72.0 597.0,73.6 560.0,73.7 521.0,73.8 460.0,73.4 400.0,73.2 341.0,73.0 300.0,75.0 260.0,77.0 226.0,78.6 200.0,80.7 160.0,83.9 120.0,87.1 86.0,89.9"/><polygon fill="rgb(246,195,123)" points="86.0,89.4 120.0,86.6 160.0,83.4 200.0,80.1 226.0,78.0 260.0,76.3 300.0,74.3 341.0,72.3 400.0,72.5 460.0,72.7 521.0,73.2 560.0,73.1 597.0,73.0 597.0,74.6 560.0,74.7 521.0,74.8 460.0,74.4 400.0,74.3 341.0,74.2 300.0,76.2 260.0,78.1 226.0,79.7 200.0,81.7 160.0,84.9 120.0,88.0 86.0,90.7"/><polygon fill="rgb(246,197,125)" points="86.0,90.2 120.0,87.5 160.0,84.3 200.0,81.1 226.0,79.0 260.0,77.4 300.0,75.5 341.0,73.5 400.0,73.6 460.0,73.8 521.0,74.2 560.0,74.1 597.0,74.0 597.0,75.6 560.0,75.7 521.0,75.8 460.0,75.5 400.0,75.4 341.0,75.4 300.0,77.3 260.0,79.2 226.0,80.8 200.0,82.8 160.0,85.8 120.0,88.9 86.0,91.5"/><polygon fill="rgb(246,199,127)" points="86.0,91.0 120.0,88.4 160.0,85.3 200.0,82.1 226.0,80.1 260.0,78.5 300.0,76.6 341.0,74.7 400.0,74.8 460.0,74.8 521.0,75.2 560.0,75.1 597.0,75.0 597.0,76.6 560.0,76.7 521.0,76.8 460.0,76.5 400.0,76.5 341.0,76.6 300.0,78.5 260.0,80.3 226.0,81.8 200.0,83.8 160.0,86.8 120.0,89.7 86.0,92.3"/><polygon fill="rgb(246,201,130)" points="86.0,91.8 120.0,89.2 160.0,86.2 200.0,83.2 226.0,81.2 260.0,79.6 300.0,77.8 341.0,75.9 400.0,75.9 460.0,75.9 521.0,76.2 560.0,76.1 597.0,76.0 597.0,77.6 560.0,77.7 521.0,77.9 460.0,77.6 400.0,77.7 341.0,77.8 300.0,79.6 260.0,81.4 226.0,82.9 200.0,84.8 160.0,87.7 120.0,90.6 86.0,93.1"/><polygon fill="rgb(246,203,133)" points="86.0,92.6 120.0,90.1 160.0,87.1 200.0,84.2 226.0,82.3 260.0,80.7 300.0,78.9 341.0,77.0 400.0,77.0 460.0,76.9 521.0,77.3 560.0,77.1 597.0,77.0 597.0,78.6 560.0,78.7 521.0,78.9 460.0,78.6 400.0,78.8 341.0,78.9 300.0,80.7 260.0,82.5 226.0,84.0 200.0,85.8 160.0,88.7 120.0,91.5 86.0,93.9"/><polygon fill="rgb(246,205,137)" points="86.0,93.4 120.0,91.0 160.0,88.1 200.0,85.2 226.0,83.3 260.0,81.8 300.0,80.1 341.0,78.2 400.0,78.1 460.0,78.0 521.0,78.3 560.0,78.1 597.0,78.0 597.0,79.6 560.0,79.7 521.0,79.9 460.0,79.7 400.0,79.9 341.0,80.1 300.0,81.9 260.0,83.6 226.0,85.1 200.0,86.9 160.0,89.6 120.0,92.3 86.0,94.7"/><polygon fill="rgb(247,208,140)" points="86.0,94.2 120.0,91.8 160.0,89.0 200.0,86.2 226.0,84.4 260.0,82.9 300.0,81.2 341.0,79.4 400.0,79.2 460.0,79.1 521.0,79.3 560.0,79.1 597.0,79.0 597.0,80.6 560.0,80.8 521.0,80.9 460.0,80.7 400.0,81.0 341.0,81.3 300.0,83.0 260.0,84.7 226.0,86.1 200.0,87.9 160.0,90.5 120.0,93.2 86.0,95.5"/><polygon fill="rgb(247,210,144)" points="86.0,95.0 120.0,92.7 160.0,90.0 200.0,87.3 226.0,85.5 260.0,84.0 300.0,82.3 341.0,80.6 400.0,80.4 460.0,80.1 521.0,80.3 560.0,80.1 597.0,80.0 597.0,81.6 560.0,81.8 521.0,81.9 460.0,81.8 400.0,82.1 341.0,82.5 300.0,84.2 260.0,85.8 226.0,87.2 200.0,88.9 160.0,91.5 120.0,94.1 86.0,96.3"/><polygon fill="rgb(247,212,148)" points="86.0,95.8 120.0,93.6 160.0,90.9 200.0,88.3 226.0,86.6 260.0,85.2 300.0,83.5 341.0,81.8 400.0,81.5 460.0,81.2 521.0,81.3 560.0,81.2 597.0,81.0 597.0,82.6 560.0,82.8 521.0,82.9 460.0,82.9 400.0,83.3 341.0,83.7 300.0,85.3 260.0,86.9 226.0,88.3 200.0,89.9 160.0,92.4 120.0,94.9 86.0,97.1"/><polygon fill="rgb(247,214,151)" points="86.0,96.6 120.0,94.4 160.0,91.9 200.0,89.3 226.0,87.7 260.0,86.3 300.0,84.6 341.0,82.9 400.0,82.6 460.0,82.2 521.0,82.3 560.0,82.2 597.0,82.0 597.0,83.6 560.0,83.8 521.0,84.0 460.0,83.9 400.0,84.4 341.0,84.8 300.0,86.4 260.0,88.0 226.0,89.4 200.0,91.0 160.0,93.4 120.0,95.8 86.0,97.9"/><polygon fill="rgb(247,216,155)" points="86.0,97.4 120.0,95.3 160.0,92.8 200.0,90.3 226.0,88.7 260.0,87.4 300.0,85.8 341.0,84.1 400.0,83.7 460.0,83.3 521.0,83.3 560.0,83.2 597.0,83.0 597.0,84.6 560.0,84.8 521.0,85.0 460.0,85.0 400.0,85.5 341.0,86.0 300.0,87.6 260.0,89.1 226.0,90.4 200.0,92.0 160.0,94.3 120.0,96.7 86.0,98.7"/><polygon fill="rgb(248,218,158)" points="86.0,98.2 120.0,96.2 160.0,93.8 200.0,91.4 226.0,89.8 260.0,88.5 300.0,86.9 341.0,85.3 400.0,84.8 460.0,84.3 521.0,84.4 560.0,84.2 597.0,84.0 597.0,85.6 560.0,85.8 521.0,86.0 460.0,86.0 400.0,86.6 341.0,87.2 300.0,88.7 260.0,90.2 226.0,91.5 200.0,93.0 160.0,95.3 120.0,97.5 86.0,99.5"/><polygon fill="rgb(248,220,162)" points="86.0,99.0 120.0,97.0 160.0,94.7 200.0,92.4 226.0,90.9 260.0,89.6 300.0,88.0 341.0,86.5 400.0,85.9 460.0,85.4 521.0,85.4 560.0,85.2 597.0,85.0 597.0,86.6 560.0,86.8 521.0,87.0 460.0,87.1 400.0,87.7 341.0,88.4 300.0,89.9 260.0,91.3 226.0,92.6 200.0,94.0 160.0,96.2 120.0,98.4 86.0,100.3"/><polygon fill="rgb(248,222,166)" points="86.0,99.8 120.0,97.9 160.0,95.7 200.0,93.4 226.0,92.0 260.0,90.7 300.0,89.2 341.0,87.7 400.0,87.1 460.0,86.5 521.0,86.4 560.0,86.2 597.0,86.0 597.0,87.6 560.0,87.8 521.0,88.0 460.0,88.1 400.0,88.9 341.0,89.5 300.0,91.0 260.0,92.5 226.0,93.7 200.0,95.0 160.0,97.2 120.0,99.3 86.0,101.1"/><polygon fill="rgb(248,225,170)" points="86.0,100.6 120.0,98.8 160.0,96.6 200.0,94.4 226.0,93.0 260.0,91.8 300.0,90.3 341.0,88.8 400.0,88.2 460.0,87.5 521.0,87.4 560.0,87.2 597.0,87.0 597.0,88.6 560.0,88.8 521.0,89.0 460.0,89.2 400.0,90.0 341.0,90.7 300.0,92.2 260.0,93.6 226.0,94.7 200.0,96.1 160.0,98.1 120.0,100.1 86.0,101.9"/><polygon fill="rgb(249,227,177)" points="86.0,101.4 120.0,99.6 160.0,97.5 200.0,95.5 226.0,94.1 260.0,92.9 300.0,91.5 341.0,90.0 400.0,89.3 460.0,88.6 521.0,88.4 560.0,88.2 597.0,88.0 597.0,89.6 560.0,89.8 521.0,90.0 460.0,90.3 400.0,91.1 341.0,91.9 300.0,93.3 260.0,94.7 226.0,95.8 200.0,97.1 160.0,99.1 120.0,101.0 86.0,102.7"/><polygon fill="rgb(249,230,183)" points="86.0,102.2 120.0,100.5 160.0,98.5 200.0,96.5 226.0,95.2 260.0,94.0 300.0,92.6 341.0,91.2 400.0,90.4 460.0,89.6 521.0,89.4 560.0,89.2 597.0,89.0 597.0,90.6 560.0,90.8 521.0,91.1 460.0,91.3 400.0,92.2 341.0,93.1 300.0,94.4 260.0,95.8 226.0,96.9 200.0,98.1 160.0,100.0 120.0,101.9 86.0,103.5"/><polygon fill="rgb(250,232,190)" points="86.0,103.0 120.0,101.4 160.0,99.4 200.0,97.5 226.0,96.2 260.0,95.1 300.0,93.8 341.0,92.4 400.0,91.5 460.0,90.7 521.0,90.4 560.0,90.2 597.0,90.0 597.0,91.6 560.0,91.8 521.0,92.1 460.0,92.4 400.0,93.3 341.0,94.3 300.0,95.6 260.0,96.9 226.0,98.0 200.0,99.1 160.0,100.9 120.0,102.7 86.0,104.3"/><polygon fill="rgb(250,235,197)" points="86.0,103.8 120.0,102.2 160.0,100.4 200.0,98.5 226.0,97.3 260.0,96.2 300.0,94.9 341.0,93.6 400.0,92.7 460.0,91.7 521.0,91.5 560.0,91.2 597.0,91.0 597.0,92.6 560.0,92.8 521.0,93.1 460.0,93.4 400.0,94.4 341.0,95.4 300.0,96.7 260.0,98.0 226.0,99.0 200.0,100.2 160.0,101.9 120.0,103.6 86.0,105.1"/><polygon fill="rgb(251,237,203)" points="86.0,104.6 120.0,103.1 160.0,101.3 200.0,99.6 226.0,98.4 260.0,97.3 300.0,96.0 341.0,94.7 400.0,93.8 460.0,92.8 521.0,92.5 560.0,92.2 597.0,92.0 597.0,93.6 560.0,93.8 521.0,94.1 460.0,94.5 400.0,95.6 341.0,96.6 300.0,97.9 260.0,99.1 226.0,100.1 200.0,101.2 160.0,102.8 120.0,104.5 86.0,105.9"/><polygon fill="rgb(252,240,210)" points="86.0,105.4 120.0,104.0 160.0,102.3 200.0,100.6 226.0,99.5 260.0,98.4 300.0,97.2 341.0,95.9 400.0,94.9 460.0,93.8 521.0,93.5 560.0,93.2 597.0,93.0 597.0,94.6 560.0,94.9 521.0,95.1 460.0,95.5 400.0,96.7 341.0,97.8 300.0,99.0 260.0,100.2 226.0,101.2 200.0,102.2 160.0,103.8 120.0,105.3 86.0,106.7"/><polygon fill="rgb(252,242,217)" points="86.0,106.2 120.0,104.8 160.0,103.2 200.0,101.6 226.0,100.5 260.0,99.5 300.0,98.3 341.0,97.1 400.0,96.0 460.0,94.9 521.0,94.5 560.0,94.2 597.0,94.0 597.0,95.6 560.0,95.9 521.0,96.1 460.0,96.6 400.0,97.8 341.0,99.0 300.0,100.2 260.0,101.3 226.0,102.3 200.0,103.2 160.0,104.7 120.0,106.2 86.0,107.5"/><polygon fill="rgb(253,245,225)" points="86.0,107.0 120.0,105.7 160.0,104.2 200.0,102.6 226.0,101.6 260.0,100.6 300.0,99.5 341.0,98.3 400.0,97.1 460.0,96.0 521.0,95.5 560.0,95.3 597.0,95.0 597.0,96.6 560.0,96.9 521.0,97.1 460.0,97.7 400.0,98.9 341.0,100.2 300.0,101.3 260.0,102.4 226.0,103.3 200.0,104.3 160.0,105.7 120.0,107.1 86.0,108.3"/><polygon fill="rgb(254,248,234)" points="86.0,107.8 120.0,106.6 160.0,105.1 200.0,103.6 226.0,102.7 260.0,101.7 300.0,100.6 341.0,99.5 400.0,98.2 460.0,97.0 521.0,96.5 560.0,96.3 597.0,96.0 597.0,97.6 560.0,97.9 521.0,98.2 460.0,98.7 400.0,100.0 341.0,101.3 300.0,102.4 260.0,103.5 226.0,104.4 200.0,105.3 160.0,106.6 120.0,107.9 86.0,109.1"/><polygon fill="rgb(255,251,242)" points="86.0,108.6 120.0,107.4 160.0,106.0 200.0,104.7 226.0,103.8 260.0,102.8 300.0,101.8 341.0,100.6 400.0,99.4 460.0,98.1 521.0,97.6 560.0,97.3 597.0,97.0 597.0,98.6 560.0,98.9 521.0,99.2 460.0,99.8 400.0,101.2 341.0,102.5 300.0,103.6 260.0,104.6 226.0,105.5 200.0,106.3 160.0,107.6 120.0,108.8 86.0,109.9"/><polygon fill="rgb(255,253,248)" points="86.0,109.4 120.0,108.3 160.0,107.0 200.0,105.7 226.0,104.8 260.0,104.0 300.0,102.9 341.0,101.8 400.0,100.5 460.0,99.1 521.0,98.6 560.0,98.3 597.0,98.0 597.0,99.6 560.0,99.9 521.0,100.2 460.0,100.8 400.0,102.3 341.0,103.7 300.0,104.7 260.0,105.7 226.0,106.6 200.0,107.3 160.0,108.5 120.0,109.7 86.0,110.7"/><polygon fill="rgb(255,254,253)" points="86.0,110.2 120.0,109.2 160.0,107.9 200.0,106.7 226.0,105.9 260.0,105.1 300.0,104.0 341.0,103.0 400.0,101.6 460.0,100.2 521.0,99.6 560.0,99.3 597.0,99.0 597.0,100.6 560.0,100.9 521.0,101.2 460.0,101.9 400.0,103.4 341.0,104.9 300.0,105.9 260.0,106.8 226.0,107.6 200.0,108.4 160.0,109.5 120.0,110.5 86.0,111.5"/><rect x="84" y="110" width="516" height="12" fill="#fff"/><polygon points="330,24 597,16 597,46 330,48" fill="url(#rightred)" filter="url(#blur2)"/></g></g><g filter="url(#blur1)" opacity="0.3"><path d="M330,40 C420,36 500,38 597,46 L597,49 C500,42 420,40 330,43 Z" fill="#ff9a80"/></g><ellipse cx="479" cy="82" rx="165" ry="22" fill="url(#sunglow)"/><ellipse cx="479" cy="84" rx="100" ry="12" fill="#f8d860" opacity="0.55" filter="url(#blur2)"/><g opacity="0.85" filter="url(#blur05)" fill="#f4c444"><polygon points="466.4,74.8 466.4,61.0 479.0,53.3 493.0,61.0 493.0,74.8"/><polygon points="451.8,59.3 458.6,59.3 467.2,74.8 460.3,74.8"/><polygon points="382.2,63.3 414.8,64.5 443.2,75.6 427.7,80.0 382.2,75.6"/><polygon points="382.2,76.5 422.5,79.5 422.5,82.5 382.2,80.5"/><polygon points="506.2,59.3 499.4,59.3 490.8,74.8 497.7,74.8"/><polygon points="575.8,63.3 543.2,64.5 514.8,75.6 530.3,80.0 575.8,75.6"/><polygon points="575.8,76.5 535.5,79.5 535.5,82.5 575.8,80.5"/></g><polygon points="297.0,29.8 301.4,34.6 314.1,34.8 304.2,37.9 307.6,42.8 297.0,40.0 286.4,42.8 289.8,37.9 279.9,34.8 292.6,34.6" fill="#f0b840" opacity="0.7" filter="url(#blur05)"/><polygon points="323.0,56.0 327.9,61.3 342.0,61.5 331.0,65.0 334.8,70.5 323.0,67.4 311.2,70.5 315.0,65.0 304.0,61.5 318.1,61.3" fill="#f0b840" opacity="0.7" filter="url(#blur05)"/><polygon points="258.0,72.8 264.9,80.2 284.6,80.5 269.2,85.5 274.5,93.1 258.0,88.7 241.5,93.1 246.8,85.5 231.4,80.5 251.1,80.2" fill="#f0b840" opacity="0.12" filter="url(#blur05)"/><text x="105.4" y="100.7" font-size="27.3" fill="#111" stroke="#111" stroke-width="0.7" font-family="Liberation Sans" textLength="90" lengthAdjust="spacingAndGlyphs">In 2019</text><g filter="url(#blur05)"><text x="165.4" y="136.6" font-size="17.6" font-weight="bold" fill="#161616" transform="translate(165.4 0) scale(1.19 1) translate(-165.4 0)">INTERNET <tspan fill="#8cc43c">SPEED</tspan></text><text x="165.4" y="153" font-size="17.6" font-weight="bold" fill="#161616" transform="translate(165.4 0) scale(1.19 1) translate(-165.4 0)">IN SOUTHEAST ASIA</text></g><g fill="none" stroke="#111" stroke-width="3.8" stroke-linecap="round"><path d="M396,124 A18,18 0 0 0 396,146"/><path d="M388,118 A26,26 0 0 0 388,152"/><path d="M422,124 A18,18 0 0 1 422,146"/><path d="M430,118 A26,26 0 0 1 430,152"/></g><circle cx="409" cy="135" r="6.8" fill="#111"/><polygon points="407.5,140 410.5,140 413.5,182 404.5,182" fill="#111"/><text x="149.6" y="186.2" font-size="4" font-weight="bold" fill="#333" textLength="35" lengthAdjust="spacingAndGlyphs">Average Speed</text><text x="149.6" y="190.2" font-size="3.6" font-weight="bold" fill="#333" textLength="15" lengthAdjust="spacingAndGlyphs">(Mbps)</text><text x="163" y="201.2" font-size="7.7" fill="#707070" text-anchor="end" textLength="10.2" lengthAdjust="spacingAndGlyphs">80</text><rect x="171.5" y="198.4" width="350" height="0.9" fill="#e4e4ea"/><text x="163" y="213.4" font-size="7.7" fill="#707070" text-anchor="end" textLength="10.2" lengthAdjust="spacingAndGlyphs">70</text><rect x="171.5" y="210.6" width="350" height="0.9" fill="#e4e4ea"/><text x="163" y="225.7" font-size="7.7" fill="#707070" text-anchor="end" textLength="10.2" lengthAdjust="spacingAndGlyphs">60</text><rect x="171.5" y="222.9" width="350" height="0.9" fill="#e4e4ea"/><text x="163" y="237.9" font-size="7.7" fill="#707070" text-anchor="end" textLength="10.2" lengthAdjust="spacingAndGlyphs">50</text><rect x="171.5" y="235.1" width="350" height="0.9" fill="#e4e4ea"/><text x="163" y="250.2" font-size="7.7" fill="#707070" text-anchor="end" textLength="10.2" lengthAdjust="spacingAndGlyphs">40</text><rect x="171.5" y="247.4" width="350" height="0.9" fill="#e4e4ea"/><text x="163" y="262.4" font-size="7.7" fill="#707070" text-anchor="end" textLength="10.2" lengthAdjust="spacingAndGlyphs">30</text><rect x="171.5" y="259.6" width="350" height="0.9" fill="#e4e4ea"/><text x="163" y="274.6" font-size="7.7" fill="#707070" text-anchor="end" textLength="10.2" lengthAdjust="spacingAndGlyphs">20</text><rect x="171.5" y="271.8" width="350" height="0.9" fill="#e4e4ea"/><text x="163" y="286.9" font-size="7.7" fill="#707070" text-anchor="end" textLength="10.2" lengthAdjust="spacingAndGlyphs">10</text><rect x="171.5" y="284.1" width="350" height="0.9" fill="#e4e4ea"/><text x="163" y="299.1" font-size="7.7" fill="#707070" text-anchor="end">0</text><rect x="171.5" y="296.3" width="350" height="1" fill="#dcdcdc"/><rect x="179" y="210.1" width="19" height="86.4" fill="url(#bar)"/><rect x="211.4" y="267.2" width="19" height="29.3" fill="url(#bar)"/><rect x="243.5" y="274.4" width="19" height="22.1" fill="url(#bar)"/><rect x="276.2" y="288" width="19" height="8.5" fill="url(#bar)"/><rect x="308.5" y="288.8" width="19" height="7.7" fill="url(#bar)"/><rect x="341.3" y="289.1" width="19" height="7.4" fill="url(#bar)"/><rect x="373.4" y="290.5" width="19" height="6.0" fill="url(#bar)"/><rect x="405.5" y="290.5" width="19" height="6.0" fill="url(#bar)"/><rect x="438.2" y="291.9" width="19" height="4.6" fill="url(#bar)"/><rect x="470.5" y="292.7" width="19" height="3.8" fill="url(#bar)"/><g filter="url(#blur05)"><g transform="translate(179.5 299)"><clipPath id="fc179"><rect width="18.5" height="10.5" rx="1.5"/></clipPath><g clip-path="url(#fc179)"><rect width="18.5" height="10.5" fill="#f4f4f4"/><rect width="18.5" height="5.25" fill="#e83a3a"/></g></g><text x="0" y="0" font-size="4.6" font-weight="bold" fill="#5a6a30" text-anchor="end" textLength="29" lengthAdjust="spacingAndGlyphs" transform="translate(189.2 313.5) rotate(-90)">SINGAPORE</text><g transform="translate(211.8 299)"><clipPath id="fc211"><rect width="18.5" height="10.5" rx="1.5"/></clipPath><g clip-path="url(#fc211)"><rect width="18.5" height="10.5" fill="#f09aa8"/><rect width="9" height="5" fill="#2a3a8a"/></g></g><text x="0" y="0" font-size="4.6" font-weight="bold" fill="#5a6a30" text-anchor="end" textLength="25" lengthAdjust="spacingAndGlyphs" transform="translate(221.5 313.5) rotate(-90)">MALAYSIA</text><g transform="translate(244.1 299)"><clipPath id="fc244"><rect width="18.5" height="10.5" rx="1.5"/></clipPath><g clip-path="url(#fc244)"><rect width="18.5" height="10.5" fill="#e84a4a"/><rect y="1.8" width="18.5" height="6.9" fill="#f4f4f4"/><rect y="3.5" width="18.5" height="3.5" fill="#2a2a6a"/></g></g><text x="0" y="0" font-size="4.6" font-weight="bold" fill="#5a6a30" text-anchor="end" textLength="24.7" lengthAdjust="spacingAndGlyphs" transform="translate(253.8 313.5) rotate(-90)">THAILAND</text><g transform="translate(276.4 299)"><clipPath id="fc276"><rect width="18.5" height="10.5" rx="1.5"/></clipPath><g clip-path="url(#fc276)"><rect width="18.5" height="10.5" fill="#e8381e"/><circle cx="9.2" cy="5.2" r="2.2" fill="#f8d030"/></g></g><text x="0" y="0" font-size="4.6" font-weight="bold" fill="#5a6a30" text-anchor="end" textLength="22" lengthAdjust="spacingAndGlyphs" transform="translate(286.1 313.5) rotate(-90)">VIETNAM</text><g transform="translate(308.7 299)"><clipPath id="fc308"><rect width="18.5" height="10.5" rx="1.5"/></clipPath><g clip-path="url(#fc308)"><rect width="18.5" height="10.5" fill="#f0f0f0"/><rect width="18.5" height="5.25" fill="#e83a3a"/></g></g><text x="0" y="0" font-size="4.6" font-weight="bold" fill="#5a6a30" text-anchor="end" textLength="26.6" lengthAdjust="spacingAndGlyphs" transform="translate(318.4 313.5) rotate(-90)">INDONESIA</text><g transform="translate(341.0 299)"><clipPath id="fc341"><rect width="18.5" height="10.5" rx="1.5"/></clipPath><g clip-path="url(#fc341)"><rect width="18.5" height="5.25" fill="#2850b0"/><rect y="5.25" width="18.5" height="5.25" fill="#e03838"/><polygon points="0,0 8,5.25 0,10.5" fill="#f4f0d0"/></g></g><text x="0" y="0" font-size="4.6" font-weight="bold" fill="#5a6a30" text-anchor="end" textLength="29.3" lengthAdjust="spacingAndGlyphs" transform="translate(350.7 313.5) rotate(-90)">PHILIPPINES</text><g transform="translate(373.29999999999995 299)"><clipPath id="fc373"><rect width="18.5" height="10.5" rx="1.5"/></clipPath><g clip-path="url(#fc373)"><rect width="18.5" height="3.5" fill="#f8d030"/><rect y="3.5" width="18.5" height="3.5" fill="#40a040"/><rect y="7" width="18.5" height="3.5" fill="#e04030"/><circle cx="9.2" cy="5.2" r="2.6" fill="#fff"/></g></g><text x="0" y="0" font-size="4.6" font-weight="bold" fill="#5a6a30" text-anchor="end" textLength="24" lengthAdjust="spacingAndGlyphs" transform="translate(383.0 313.5) rotate(-90)">MYANMAR</text><g transform="translate(405.59999999999997 299)"><clipPath id="fc405"><rect width="18.5" height="10.5" rx="1.5"/></clipPath><g clip-path="url(#fc405)"><rect width="18.5" height="10.5" fill="#f4e040"/><polygon points="0,3 18.5,7 18.5,9 0,5" fill="#222"/><polygon points="0,2 18.5,6 18.5,7 0,3" fill="#fff"/><circle cx="9" cy="5" r="1.5" fill="#d04030"/></g></g><text x="0" y="0" font-size="4.6" font-weight="bold" fill="#5a6a30" text-anchor="end" textLength="18" lengthAdjust="spacingAndGlyphs" transform="translate(415.3 313.5) rotate(-90)">BRUNEI</text><g transform="translate(437.9 299)"><clipPath id="fc437"><rect width="18.5" height="10.5" rx="1.5"/></clipPath><g clip-path="url(#fc437)"><rect width="18.5" height="10.5" fill="#2a3a9a"/><rect y="2.6" width="18.5" height="5.3" fill="#e03030"/><rect x="6" y="3.5" width="6.5" height="3.5" fill="#fff"/></g></g><text x="0" y="0" font-size="4.6" font-weight="bold" fill="#5a6a30" text-anchor="end" textLength="25.8" lengthAdjust="spacingAndGlyphs" transform="translate(447.6 313.5) rotate(-90)">CAMBODIA</text><g transform="translate(470.2 299)"><clipPath id="fc470"><rect width="18.5" height="10.5" rx="1.5"/></clipPath><g clip-path="url(#fc470)"><rect width="18.5" height="10.5" fill="#e03030"/><rect y="2.6" width="18.5" height="5.3" fill="#2a3a8a"/><circle cx="9.2" cy="5.2" r="2" fill="#fff"/></g></g><text x="0" y="0" font-size="4.6" font-weight="bold" fill="#5a6a30" text-anchor="end" textLength="12.9" lengthAdjust="spacingAndGlyphs" transform="translate(479.9 313.5) rotate(-90)">LAOS</text><g transform="translate(502.5 299)"><clipPath id="fc502"><rect width="18.5" height="10.5" rx="1.5"/></clipPath><g clip-path="url(#fc502)"><rect width="18.5" height="10.5" fill="#e84020"/><polygon points="0,0 9,5.25 0,10.5" fill="#f8c020"/><polygon points="0,0 6,5.25 0,10.5" fill="#111"/></g></g><text x="0" y="0" font-size="4.6" font-weight="bold" fill="#5a6a30" text-anchor="end" textLength="31.3" lengthAdjust="spacingAndGlyphs" transform="translate(512.2 313.5) rotate(-90)">TIMOR LESTE</text></g><text x="197.4" y="366" font-size="15" font-weight="bold" fill="#4a8ad6" textLength="43" lengthAdjust="spacingAndGlyphs" filter="url(#blur05)">cable</text><text x="241" y="366" font-size="6.5" font-weight="bold" fill="#3a72b8" textLength="16" lengthAdjust="spacingAndGlyphs">.co.uk</text><rect x="430" y="355.3" width="14.5" height="12" rx="3" fill="#5aaae0" filter="url(#blur05)"/><rect x="433" y="357.8" width="8.5" height="7" rx="2" fill="none" stroke="#e8f4fc" stroke-width="1"/><circle cx="437.2" cy="361.3" r="1.8" fill="none" stroke="#e8f4fc" stroke-width="0.9"/><text x="448.8" y="365" font-size="8.6" font-weight="bold" fill="#5a86d4" textLength="43" lengthAdjust="spacingAndGlyphs" filter="url(#blur05)">seasia.co</text><polygon points="86,368.5 571,384 86,384" fill="url(#bot)"/><polygon points="597,0 602,0 600,384 585,384" fill="url(#redge)" filter="url(#blur05)"/><polygon points="599,0 683,0 683,384 599,384" fill="#020000"/><g transform="translate(542.2 2.7)"><rect width="54.3" height="25" fill="#f4f4f4"/><path d="M4,2.5 C16,1 26,4 36,2 C42,1 47,2.5 51,2 L51,12.5 C44,13 38,11.5 30,13 C20,14.5 12,12 4,12.5 Z" fill="#2456c0"/><path d="M4,12.5 C12,12 20,14.5 30,13 C38,11.5 44,13 51,12.5 L50,22 C44,23 38,21 30,22.5 C20,24 12,21.5 4,22.5 Z" fill="#d82a2a"/><path d="M4,2.5 L21,12.8 L4,22.5 Z" fill="#f8f6ee"/><circle cx="10" cy="12.5" r="3.4" fill="#eccc50"/></g><g transform="translate(605.1 35.3)"><rect width="77.5" height="45.4" fill="#dedcdc"/><rect x="72.8" y="13.3" width="4.7" height="32.1" fill="#1e1c40"/><rect x="72.8" y="0" width="4.7" height="13.3" fill="#c8c4e0"/><path d="M13.8,45.4 L15,33 C17,29.5 22,28.4 27,28.4 L46,28.4 C52,28.6 57,30 58.5,33 L59.3,45.4 Z" fill="#17161c"/><ellipse cx="33" cy="20.4" rx="8.5" ry="10" fill="#b09488"/><path d="M22.5,21 C21,8 27,5.8 33,5.8 C39,5.8 45,8 43.5,21 C42.5,16 40,14 33,14 C26,14 23.5,16 22.5,21 Z" fill="#1a1614"/><rect x="0" y="37" width="77.5" height="8.4" fill="#000" opacity="0.18"/><text x="1.3" y="44" font-size="5.4" fill="#f4f4f4" textLength="52.6" lengthAdjust="spacingAndGlyphs">Engr. Pernor Arguelles Jr.</text></g><rect x="4" y="3.5" width="44" height="9" rx="1" fill="#0a0a0a" stroke="#222" stroke-width="0.5"/><circle cx="10.2" cy="7.8" r="2.6" fill="#d8c8c8"/><circle cx="10.2" cy="7.8" r="1" fill="#333"/><text x="16.5" y="9.6" font-size="4.6" font-weight="bold" fill="#c8c8c8">Recording...</text></svg></div>
<div class="t" style="left:179.50px;top:463.93px;font-size:9.3px;color:#030303;font-weight:400;">i - wave 2020 webinar-2</div>
<div class="t" style="left:179.50px;top:482.45px;font-size:7.5px;color:#606060;font-weight:400;">12 watching now &bull; Started streaming 47 minutes ago</div>
<svg style="position:absolute;left:663px;top:481px" width="12" height="11" viewBox="0 0 24 22"><path d="M1 21h4V9H1v12zm22-11c0-1.1-.9-2-2-2h-6.31l.95-4.57.03-.32c0-.41-.17-.79-.44-1.06L14.17 1 7.59 7.59C7.22 7.95 7 8.45 7 9v10c0 1.1.9 2 2 2h9c.83 0 1.54-.5 1.84-1.22l3.02-7.05c.09-.23.14-.47.14-.73v-2z" fill="#065fd4"/></svg>
<div class="t" style="left:678.50px;top:483.88px;font-size:6.4px;color:#065fd4;font-weight:400;">9</div>
<svg style="position:absolute;left:695px;top:482px" width="12" height="11" viewBox="0 0 24 22"><path d="M15 1H6c-.83 0-1.54.5-1.84 1.22l-3.02 7.05c-.09.23-.14.47-.14.73v2c0 1.1.9 2 2 2h6.31l-.95 4.57-.03.32c0 .41.17.79.44 1.06L9.83 21l6.59-6.59c.36-.36.58-.86.58-1.41V3c0-1.1-.9-2-2-2zm4 0v12h4V1h-4z" fill="#909090"/></svg>
<div class="t" style="left:710.00px;top:483.88px;font-size:6.4px;color:#909090;font-weight:400;">0</div>
<svg style="position:absolute;left:726px;top:481px" width="11" height="11" viewBox="0 0 24 24"><path d="M14 9V5l7 7-7 7v-4.1c-5 0-8.5 1.6-11 5.1 1-5 4-10 11-11z" fill="#909090"/></svg>
<div class="t" style="left:741.80px;top:483.88px;font-size:6.4px;color:#909090;font-weight:400;">SHARE</div>
<svg style="position:absolute;left:776px;top:481px" width="12" height="11" viewBox="0 0 24 22"><path d="M14 8H2v2h12V8zm0-4H2v2h12V4zm4 8V8h-2v4h-4v2h4v4h2v-4h4v-2h-4zM2 14h8v-2H2v2z" fill="#909090"/></svg>
<div class="t" style="left:791.80px;top:483.88px;font-size:6.4px;color:#909090;font-weight:400;">SAVE</div>
<svg style="position:absolute;left:822px;top:482px" width="10" height="10" viewBox="0 0 24 24"><path d="M14.4 6L14 4H5v17h2v-7h5.6l.4 2h7V6z" fill="#909090"/></svg>
<div style="position:absolute;left:847.0px;top:486px;width:2px;height:2px;background:#909090;border-radius:1px"></div>
<div style="position:absolute;left:850.6px;top:486px;width:2px;height:2px;background:#909090;border-radius:1px"></div>
<div style="position:absolute;left:854.2px;top:486px;width:2px;height:2px;background:#909090;border-radius:1px"></div>
<div style="position:absolute;left:659px;top:498px;width:59px;height:2px;background:#065fd4"></div>
<div style="position:absolute;left:179px;top:500px;width:683px;height:1px;background:#e5e5e5"></div>
<svg style="position:absolute;left:178.5px;top:508.5px" width="27" height="27" viewBox="0 0 54 54"><circle cx="27" cy="27" r="26" fill="#fff" stroke="#8a2a20" stroke-width="2"/><circle cx="46.00" cy="27.00" r="4.2" fill="#8a2a20"/><circle cx="43.45" cy="36.50" r="4.2" fill="#8a2a20"/><circle cx="36.50" cy="43.45" r="4.2" fill="#8a2a20"/><circle cx="27.00" cy="46.00" r="4.2" fill="#8a2a20"/><circle cx="17.50" cy="43.45" r="4.2" fill="#8a2a20"/><circle cx="10.55" cy="36.50" r="4.2" fill="#8a2a20"/><circle cx="8.00" cy="27.00" r="4.2" fill="#8a2a20"/><circle cx="10.55" cy="17.50" r="4.2" fill="#8a2a20"/><circle cx="17.50" cy="10.55" r="4.2" fill="#8a2a20"/><circle cx="27.00" cy="8.00" r="4.2" fill="#8a2a20"/><circle cx="36.50" cy="10.55" r="4.2" fill="#8a2a20"/><circle cx="43.45" cy="17.50" r="4.2" fill="#8a2a20"/><circle cx="27" cy="27" r="13" fill="none" stroke="#8a2a20" stroke-width="1.6"/><line x1="18.0" y1="16" x2="18.0" y2="38" stroke="#8a2a20" stroke-width="1.2"/><line x1="22.5" y1="16" x2="22.5" y2="38" stroke="#8a2a20" stroke-width="1.2"/><line x1="27.0" y1="16" x2="27.0" y2="38" stroke="#8a2a20" stroke-width="1.2"/><line x1="31.5" y1="16" x2="31.5" y2="38" stroke="#8a2a20" stroke-width="1.2"/><line x1="36.0" y1="16" x2="36.0" y2="38" stroke="#8a2a20" stroke-width="1.2"/><line x1="14" y1="27" x2="40" y2="27" stroke="#8a2a20" stroke-width="1.2"/><circle cx="27" cy="27" r="24.5" fill="none" stroke="#8a2a20" stroke-width="1.2"/></svg>
<div class="t" style="left:213.80px;top:515.10px;font-size:7.44px;color:#030303;font-weight:400;-webkit-text-stroke:0.12px #030303">IIS deemed to be University Official</div>
<div class="t" style="left:213.80px;top:523.20px;font-size:6.85px;color:#606060;font-weight:400;">1.19K subscribers</div>
<div style="position:absolute;left:777px;top:513px;width:62px;height:19px;background:#ececec;border-radius:2px"></div>
<div class="t" style="left:785.90px;top:520.24px;font-size:6.8px;color:#606060;font-weight:400;">SUBSCRIBED</div>
<svg style="position:absolute;left:846px;top:516px" width="12" height="13" viewBox="0 0 24 24"><path d="M12 22c1.1 0 2-.9 2-2h-4c0 1.1.9 2 2 2zm6-6v-5c0-3.07-1.63-5.64-4.5-6.32V4c0-.83-.67-1.5-1.5-1.5s-1.5.67-1.5 1.5v.68C7.64 5.36 6 7.92 6 11v5l-2 2v1h16v-1l-2-2zm-2 1H8v-6c0-2.48 1.51-4.5 4-4.5s4 2.02 4 4.5v6z" fill="#606060"/></svg>
<div class="t" style="left:213.80px;top:545.31px;font-size:7.2px;color:#030303;font-weight:400;">I-Waves 2020</div>
<div class="t" style="left:213.80px;top:555.89px;font-size:7.34px;color:#030303;font-weight:400;">International Webinars on Advances in E-Services 2020</div>
<div style="position:absolute;left:179px;top:572px;width:683px;height:1px;background:#e5e5e5"></div>
<div style="position:absolute;left:874px;top:67px;width:215px;height:384px;background:#f9f9f9;border:1px solid #e6e6e6;box-sizing:border-box"></div>
<div style="position:absolute;left:875px;top:68px;width:213px;height:25px;background:#fff"></div>
<div class="t" style="left:888.40px;top:76.62px;font-size:8.6px;color:#030303;font-weight:400;">Top chat</div>
<div style="position:absolute;left:925px;top:79.5px;width:0;height:0;border-left:3px solid transparent;border-right:3px solid transparent;border-top:3px solid #606060"></div>
<div style="position:absolute;left:1073px;top:77.0px;width:1.6px;height:1.6px;background:#606060;border-radius:1px"></div>
<div style="position:absolute;left:1073px;top:80.1px;width:1.6px;height:1.6px;background:#606060;border-radius:1px"></div>
<div style="position:absolute;left:1073px;top:83.2px;width:1.6px;height:1.6px;background:#606060;border-radius:1px"></div>
<div style="position:absolute;left:1077px;top:93px;width:11px;height:281px;background:#f0f0f0"></div>
<div style="position:absolute;left:888px;top:97.75px;width:13px;height:13px;border-radius:50%;background:radial-gradient(circle at 50% 60%,#c8d0d8 0%,#704030 30%,#301810 70%)"></div>
<div class="t" style="left:909.75px;top:100.04px;font-size:6.8px;color:#888888;font-weight:400;">Harshita Bhargava<span style="color:#0d0d0d;margin-left:4.5px">waiting for a wonderful</span></div>
<div class="t" style="left:909.75px;top:108.14px;font-size:6.8px;color:#0d0d0d;font-weight:400;">session</div>
<div style="position:absolute;left:888px;top:119px;width:13px;height:13px;border-radius:50%;background:radial-gradient(circle at 50% 50%,#803838 0%,#c0a8a0 40%,#d8c8c0 80%)"></div>
<div class="t" style="left:909.75px;top:123.14px;font-size:6.8px;color:#888888;font-weight:400;">Mitisha Rathore<span style="color:#0d0d0d;margin-left:4.5px">Good evening everyone.</span></div>
<div style="position:absolute;left:888px;top:136.5px;width:13px;height:13px;border-radius:50%;background:radial-gradient(circle at 50% 50%,#803838 0%,#c0a8a0 40%,#d8c8c0 80%)"></div>
<div class="t" style="left:909.75px;top:140.04px;font-size:6.8px;color:#888888;font-weight:400;">Mitisha Rathore<span style="color:#0d0d0d;margin-left:4.5px">Happy Independence Day to all</span></div>
<div style="position:absolute;left:888px;top:153.1px;width:13px;height:13px;border-radius:50%;background:radial-gradient(circle at 50% 50%,#f0e0d8 0%,#c89080 50%,#a06050 90%)"></div>
<div class="t" style="left:909.75px;top:156.94px;font-size:6.8px;color:#888888;font-weight:400;">Gayathri N<span style="color:#0d0d0d;margin-left:4.5px">Good Evening all.......</span></div>
<div style="position:absolute;left:888px;top:170.6px;width:13px;height:13px;border-radius:50%;background:radial-gradient(ellipse 38% 16% at 50% 74%,#e8d4a8 0%,#c8a474 70%,rgba(160,120,70,0) 100%),radial-gradient(ellipse 40% 50% at 50% 58%,#e0d8c0 0%,#8a8476 30%,#3c3c36 65%,#1e1e1c 100%)"></div>
<div class="t" style="left:909.75px;top:171.94px;font-size:6.8px;color:#888888;font-weight:400;">JOSHITA SHARMA<span style="color:#0d0d0d;margin-left:4.5px">Happy Independence Day to</span></div>
<div class="t" style="left:909.75px;top:180.29px;font-size:6.8px;color:#0d0d0d;font-weight:400;">all</div>
<div style="position:absolute;left:888px;top:191.9px;width:13px;height:13px;border-radius:50%;background:radial-gradient(circle at 55% 60%,#c09070 0%,#604030 40%,#201810 80%)"></div>
<div class="t" style="left:909.75px;top:195.64px;font-size:6.8px;color:#888888;font-weight:400;">Elavarasi Gunasekaran<span style="color:#0d0d0d;margin-left:4.5px">Good evening all...</span></div>
<div style="position:absolute;left:888px;top:208.75px;width:13px;height:13px;border-radius:50%;background:radial-gradient(circle at 50% 60%,#5090c0 0%,#304870 40%,#101828 80%)"></div>
<div class="t" style="left:909.75px;top:212.54px;font-size:6.8px;color:#888888;font-weight:400;">Shivani Sharma<span style="color:#0d0d0d;margin-left:4.5px">good evening everyone</span></div>
<div style="position:absolute;left:888px;top:225.6px;width:13px;height:13px;border-radius:50%;background:radial-gradient(circle at 50% 60%,#4070b0 0%,#7088a8 50%,#a0a8c0 90%)"></div>
<div class="t" style="left:909.75px;top:227.54px;font-size:6.8px;color:#888888;font-weight:400;">Teekesh Kumar Kumawat<span style="color:#0d0d0d;margin-left:4.5px">happy independence</span></div>
<div class="t" style="left:909.75px;top:235.64px;font-size:6.8px;color:#0d0d0d;font-weight:400;">day all</div>
<div style="position:absolute;left:888px;top:298.1px;width:13px;height:13px;border-radius:50%;background:radial-gradient(circle at 50% 50%,#803838 0%,#c0a8a0 40%,#d8c8c0 80%)"></div>
<div class="t" style="left:909.75px;top:301.94px;font-size:6.8px;color:#888888;font-weight:400;">Mitisha Rathore<span style="color:#0d0d0d;margin-left:4.5px">Thank you Sir</span></div>
<div style="position:absolute;left:888px;top:248px;width:177px;height:45.5px;background:#eeeeee"></div>
<svg style="position:absolute;left:897px;top:256px" width="12" height="8.5" viewBox="0 0 28 20"><path d="M27.4 3.1A3.6 3.6 0 0 0 24.9.6C22.7 0 14 0 14 0S5.3 0 3.1.6A3.6 3.6 0 0 0 .6 3.1C0 5.3 0 10 0 10s0 4.7.6 6.9a3.6 3.6 0 0 0 2.5 2.5C5.3 20 14 20 14 20s8.7 0 10.9-.6a3.6 3.6 0 0 0 2.5-2.5C28 14.7 28 10 28 10s0-4.7-.6-6.9z" fill="#f00"/><path d="M11.2 14.3L18.5 10l-7.3-4.3z" fill="#fff"/></svg>
<div class="t" style="left:918.10px;top:255.42px;font-size:6.35px;color:#0d0d0d;font-weight:400;">Welcome to live chat! Remember to guard your</div>
<div class="t" style="left:918.10px;top:263.17px;font-size:6.35px;color:#0d0d0d;font-weight:400;">privacy and abide by our community guidelines.</div>
<div class="t" style="left:918.10px;top:277.88px;font-size:6.7px;color:#3e78c8;font-weight:700;">LEARN MORE</div>
<div style="position:absolute;left:875px;top:374px;width:213px;height:76px;background:#fff"></div>
<div class="av" style="left:888px;top:383px;width:13px;height:13px"></div>
<div class="t" style="left:909.75px;top:385.27px;font-size:6.65px;color:#717171;font-weight:400;">JOSHITA SHARMA</div>
<div class="t" style="left:909.75px;top:397.21px;font-size:6.6px;color:#909090;font-weight:400;">Say something...</div>
<div style="position:absolute;left:909px;top:406px;width:167px;height:1px;background:#d0d0d0"></div>
<svg style="position:absolute;left:888px;top:413px" width="12" height="12" viewBox="0 0 24 24"><circle cx="12" cy="12" r="11" fill="#a0a0a0"/><circle cx="8.2" cy="9" r="1.7" fill="#fff"/><circle cx="15.8" cy="9" r="1.7" fill="#fff"/><path d="M6 13h12a6 6 0 0 1-12 0z" fill="#fff"/></svg>
<div class="t" style="left:1036.20px;top:416.54px;font-size:7.1px;color:#717171;font-weight:400;">0/200</div>
<svg style="position:absolute;left:1063px;top:413px" width="13" height="12" viewBox="0 0 24 22"><path d="M2 21l21-10L2 1v8l15 2-15 2z" fill="#c9c9c9"/></svg>
<div style="position:absolute;left:888px;top:434px;width:188px;height:1px;background:#e8e8e8"></div>
<div class="t" style="left:967.50px;top:441.04px;font-size:5.5px;color:#606060;font-weight:400;">HIDE CHAT</div>
<div class="t" style="left:874.80px;top:466.23px;font-size:8.35px;color:#030303;font-weight:400;">Up next</div>
<div class="t" style="left:1026.00px;top:467.30px;font-size:6.5px;color:#606060;font-weight:400;">AUTOPLAY</div>
<div style="position:absolute;left:1066px;top:466px;width:16px;height:7px;background:#c6d9f5;border-radius:4px;opacity:.9"></div>
<div style="position:absolute;left:1073.5px;top:463.8px;width:11.5px;height:11.5px;border-radius:50%;background:#065fd4;box-shadow:0 1px 2px rgba(0,0,0,.3)"></div>
<div style="position:absolute;left:875px;top:482px;width:89.5px;height:49.6px;overflow:hidden;background:linear-gradient(180deg,#2b4886 0%,#2e4c8a 26%,#4a68a4 34%,#5572aa 44%,#4864a0 56%,#34528e 70%,#2a4684 100%)">
<div style="position:absolute;left:10px;top:4.6px;font-size:5.4px;color:#b8c6e0;white-space:nowrap;letter-spacing:0.1px">Breaking the Plastic Wave</div>
<div style="position:absolute;left:21.8px;top:20.2px;width:3.4px;height:3.4px;border:0.8px solid #a8b8d8;border-radius:50%"></div>
<div style="position:absolute;left:27.5px;top:19.8px;font-size:4.4px;color:#e8eef8;font-weight:bold">pew</div>
<div style="position:absolute;left:43px;top:18.4px;width:23.5px;height:5.2px;border:0.8px solid #c8d4ea;box-sizing:border-box"></div>
<div style="position:absolute;left:46px;top:20.4px;width:18px;height:1px;background:#b0c0dc"></div>
<div style="position:absolute;left:36px;top:37px;width:17px;height:1px;background:#a0b4d4"></div>
<div style="position:absolute;left:11px;top:40px;width:15px;height:5px;background:linear-gradient(90deg,#8ea4cc,#6a84b8);opacity:.6;border-radius:2px"></div>
<div style="position:absolute;left:30px;top:41.5px;width:14px;height:3px;background:#7a92c0;opacity:.6"></div>
<div style="position:absolute;left:48px;top:40.5px;width:11px;height:4px;background:#8aa0c8;opacity:.7;border-radius:2px"></div>
</div>
<div style="position:absolute;left:934.7px;top:520.6px;width:27.8px;height:9.399999999999977px;background:rgba(0,0,0,.85);border-radius:1.5px"></div><div class="t" style="left:934.70px;top:522.56px;font-size:6.9px;color:#fff;font-weight:700;width:27.8px;text-align:center;">1:30:29</div>
<div class="t" style="left:968.75px;top:482.64px;font-size:7.4px;color:#030303;font-weight:400;-webkit-text-stroke:0.12px #030303">Breaking the Plastic Wave |</div>
<div class="t" style="left:968.75px;top:490.79px;font-size:7.4px;color:#030303;font-weight:400;-webkit-text-stroke:0.12px #030303">Launch Event</div>
<div class="t" style="left:968.75px;top:501.50px;font-size:6.85px;color:#606060;font-weight:400;">Pew</div>
<div class="t" style="left:968.75px;top:511.00px;font-size:6.85px;color:#606060;font-weight:400;">12K views &bull;</div>
<div class="t" style="left:968.75px;top:520.60px;font-size:6.85px;color:#606060;font-weight:400;">Streamed 3 weeks ago</div>
<div style="position:absolute;left:875px;top:550px;width:89.5px;height:49.6px;overflow:hidden;background:linear-gradient(90deg,#98a2aa 0%,#b8c0c8 10%,#c8d2da 40%,#dce4ea 60%,#e8ecf0 100%)">
<div style="position:absolute;left:57px;top:6px;width:33px;height:44px;background:linear-gradient(90deg,#d8b020,#f4c820 40%,#f8cc30)"></div>
<div style="position:absolute;left:58px;top:16px;width:12px;height:34px;background:#5a5448"></div>
<div style="position:absolute;left:47px;top:16px;width:11px;height:22px;background:#8eaec8;border-radius:3px 3px 0 0"></div>
<div style="position:absolute;left:49.5px;top:6.5px;width:7.5px;height:9px;background:#6a4a38;border-radius:50%"></div>
<div style="position:absolute;left:50px;top:11px;width:7px;height:4.5px;background:#30a080;border-radius:0 0 3px 3px"></div>
<div style="position:absolute;left:7px;top:7px;width:11px;height:43px;background:#1a1614;border-radius:5px 3px 0 0"></div>
<div style="position:absolute;left:9px;top:17px;width:52px;height:40px;background:#eef2f6;border-radius:10px 14px 0 0;transform:skewX(-8deg)"></div>
<div style="position:absolute;left:36px;top:36px;width:27px;height:10px;background:#f8f8fa;transform:rotate(-18deg)"></div>
<div style="position:absolute;left:59px;top:35px;width:8px;height:6px;background:#8a5a40;border-radius:50%"></div>
<div style="position:absolute;left:25px;top:5px;width:14px;height:16px;background:#b07a68;border-radius:50%"></div>
<div style="position:absolute;left:18px;top:0px;width:20px;height:7px;background:#d0d4d8;border-radius:8px 8px 4px 4px"></div>
<div style="position:absolute;left:31px;top:22px;width:1.5px;height:16px;background:#2a2a40;transform:rotate(-25deg)"></div>
</div>
<div style="position:absolute;left:945.0px;top:588.1px;width:17.5px;height:9.649999999999977px;background:rgba(0,0,0,.85);border-radius:1.5px"></div><div class="t" style="left:945.00px;top:590.31px;font-size:6.9px;color:#fff;font-weight:700;width:17.5px;text-align:center;">9:56</div>
<div class="t" style="left:968.75px;top:550.64px;font-size:7.4px;color:#030303;font-weight:400;-webkit-text-stroke:0.12px #030303">Research centres at IISU</div>
<div class="t" style="left:968.75px;top:561.25px;font-size:6.85px;color:#606060;font-weight:400;">IIS deemed to be University Official</div>
<div class="t" style="left:968.75px;top:570.25px;font-size:6.85px;color:#606060;font-weight:400;">27 views &bull; 2 weeks ago</div>
<div style="position:absolute;left:875px;top:604px;width:89.5px;height:49.6px;overflow:hidden;background:#000">
<div style="position:absolute;left:0;top:2.7px;width:89.5px;height:44.2px;background:#fff;overflow:hidden">
<div style="position:absolute;left:37px;top:0;width:53px;height:45px;background:#2a6a84"></div>
<div style="position:absolute;left:60px;top:-10px;width:12px;height:40px;background:#c41e6e;transform:rotate(40deg)"></div>
<div style="position:absolute;left:74px;top:0;width:16px;height:45px;background:#2a3a78"></div>
<div style="position:absolute;left:66px;top:12px;width:14px;height:40px;background:#2a3a78;transform:rotate(40deg)"></div>
<div style="position:absolute;left:37px;top:-1px;width:12px;height:13px;background:#1a70b8;border-radius:50% 50% 40% 40%"></div>
<div style="position:absolute;left:34px;top:10px;width:15px;height:16px;background:#2a5a78;border-radius:50%"></div>
<div style="position:absolute;left:33px;top:16px;width:36px;height:28px;background:#e8b4c2;border-radius:14px 14px 0 0;transform:skewX(-25deg)"></div>
<div style="position:absolute;left:50px;top:32px;width:22px;height:14px;background:#2a3a70;border-radius:8px 8px 0 0"></div>
<div style="position:absolute;left:50px;top:3px;width:14px;height:27px;background:#154a78;border:0.8px solid #d8e8f4;border-radius:2px;transform:rotate(-14deg)"></div>
<div style="position:absolute;left:63px;top:17px;width:13px;height:25px;background:#f6f2f4;border-radius:2px;transform:rotate(24deg)"></div>
<div style="position:absolute;left:60px;top:35px;width:8px;height:1.5px;background:#f07050;transform:rotate(24deg)"></div>
<div style="position:absolute;left:6px;top:11.8px;width:3.5px;height:3.2px;background:#1a2a5a"></div>
<div style="position:absolute;left:11px;top:13px;width:12px;height:1px;background:#c0c8d8"></div>
<div style="position:absolute;left:6px;top:17.8px;width:24px;height:1px;background:#687888"></div>
<div style="position:absolute;left:6px;top:20.8px;width:27px;height:1px;background:#687888"></div>
<div style="position:absolute;left:6px;top:23.8px;width:26px;height:1px;background:#687888"></div>
<div style="position:absolute;left:6px;top:26.8px;width:15px;height:1px;background:#687888"></div>
<div style="position:absolute;left:6px;top:30.2px;width:7px;height:2.6px;background:#333"></div>
<div style="position:absolute;left:14.3px;top:30.2px;width:7px;height:2.6px;background:#333"></div>
</div></div>
<div style="position:absolute;left:941.0px;top:642.5px;width:21.5px;height:8.5px;background:rgba(0,0,0,.85);border-radius:1.5px"></div><div class="t" style="left:941.00px;top:643.56px;font-size:6.9px;color:#fff;font-weight:700;width:21.5px;text-align:center;">59:34</div>
<div class="t" style="left:968.75px;top:606.04px;font-size:7.4px;color:#030303;font-weight:400;-webkit-text-stroke:0.12px #030303">Webinar: Will there be a second</div>
<div class="t" style="left:968.75px;top:613.54px;font-size:7.4px;color:#030303;font-weight:400;-webkit-text-stroke:0.12px #030303">wave of COVID-19?</div>
<div class="t" style="left:968.75px;top:623.75px;font-size:6.85px;color:#606060;font-weight:400;">Zoe</div>
<div class="t" style="left:968.75px;top:633.10px;font-size:6.85px;color:#606060;font-weight:400;">Recommended for you</div>
<div style="position:absolute;left:875px;top:658px;width:89.5px;height:13px;overflow:hidden;background:#eeeef8">
<div style="position:absolute;left:0;top:0;width:89.5px;height:2.8px;background:linear-gradient(90deg,#38a8b0 0%,#2a7aa0 30%,#1a1a70 35%,#1a1a70 100%)"></div>
<div style="position:absolute;left:0;top:2.8px;width:89.5px;height:3.3px;background:#1e2488"></div>
<div style="position:absolute;left:2px;top:4px;width:10px;height:10px;background:#7a5a48;border-radius:50%"></div>
<div style="position:absolute;left:50px;top:4px;width:9px;height:10px;background:#4a3030;border-radius:50%"></div>
<div style="position:absolute;left:15px;top:7.5px;width:14px;height:1px;background:#8888aa"></div>
<div style="position:absolute;left:63px;top:7.5px;width:22px;height:1px;background:#8888aa"></div>
<div style="position:absolute;left:63px;top:9.5px;width:18px;height:1px;background:#8888aa"></div>
</div>
<div class="t" style="left:968.75px;top:659.29px;font-size:7.4px;color:#030303;font-weight:400;-webkit-text-stroke:0.12px #030303">i - wave 2020</div>
<div style="position:absolute;left:875px;top:540px;width:214px;height:1px;background:#e5e5e5"></div>
<div style="position:absolute;left:0;top:670px;width:1280px;height:1px;background:#3a3a3a"></div><div style="position:absolute;left:32px;top:670px;width:228px;height:1px;background:#c8c8c8"></div>
</body></html>
